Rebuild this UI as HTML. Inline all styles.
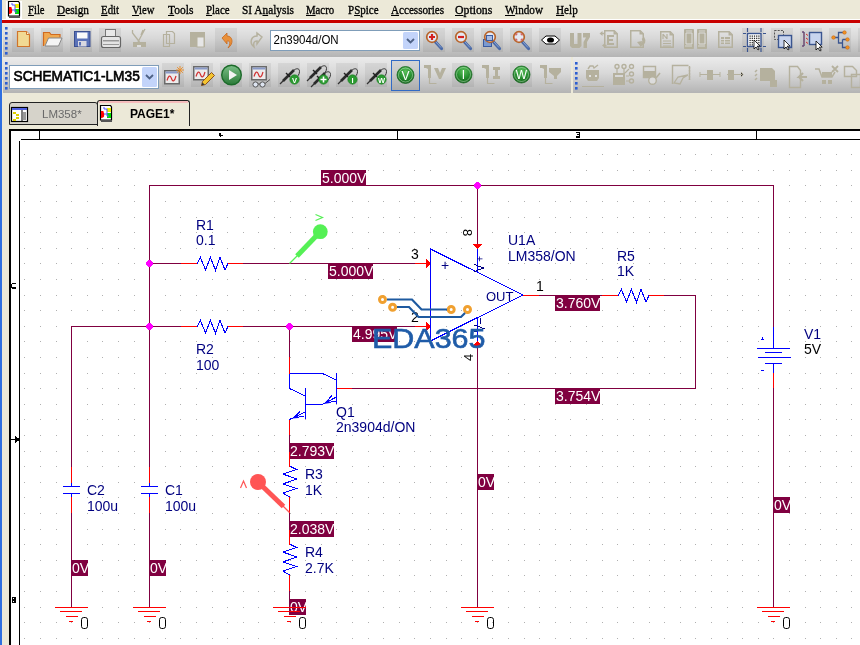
<!DOCTYPE html>
<html><head><meta charset="utf-8"><style>
*{margin:0;padding:0;box-sizing:border-box}
html,body{width:860px;height:645px;overflow:hidden;background:#ece9d8;font-family:"Liberation Sans",sans-serif}
.a{position:absolute}
#menu span{position:absolute;top:2px;transform-origin:0 0;font-family:"Liberation Serif",serif;font-size:13px;color:#000;white-space:nowrap;-webkit-text-stroke:0.35px #000}
svg text{font-family:"Liberation Sans",sans-serif}
svg,#menu,.a{will-change:transform}
</style></head><body>
<div class="a" style="left:0;top:0;width:2px;height:645px;background:#2f6fe0"></div>
<div id="menu" class="a" style="left:0;top:0;width:860px;height:19px"><span style="left:28.00px;transform:scaleX(0.820)"><u>F</u>ile</span><span style="left:56.70px;transform:scaleX(0.868)"><u>D</u>esign</span><span style="left:101.40px;transform:scaleX(0.836)"><u>E</u>dit</span><span style="left:132.00px;transform:scaleX(0.814)"><u>V</u>iew</span><span style="left:168.40px;transform:scaleX(0.883)"><u>T</u>ools</span><span style="left:205.50px;transform:scaleX(0.839)"><u>P</u>lace</span><span style="left:241.50px;transform:scaleX(0.872)">SI A<u>n</u>alysis</span><span style="left:306.40px;transform:scaleX(0.829)"><u>M</u>acro</span><span style="left:347.60px;transform:scaleX(0.847)">P<u>S</u>pice</span><span style="left:391.00px;transform:scaleX(0.855)"><u>A</u>ccessories</span><span style="left:455.20px;transform:scaleX(0.905)"><u>O</u>ptions</span><span style="left:504.50px;transform:scaleX(0.858)"><u>W</u>indow</span><span style="left:555.80px;transform:scaleX(0.860)"><u>H</u>elp</span></div>
<div class="a" style="left:2px;top:19px;width:858px;height:1px;background:#fff"></div>
<div class="a" style="left:2px;top:20px;width:858px;height:3px;background:#c80000"></div>
<div class="a" style="left:3px;top:23px;width:857px;height:34px;background:linear-gradient(#ebebeb,#d8d8d8 45%,#b4b4b4)"></div>
<div class="a" style="left:3px;top:57px;width:568px;height:36px;background:linear-gradient(#ebebeb,#d8d8d8 45%,#b4b4b4)"></div>
<div class="a" style="left:573px;top:57px;width:287px;height:36px;background:linear-gradient(#ebebeb,#d8d8d8 45%,#b4b4b4)"></div>
<svg class="a" style="left:0;top:0" width="860" height="130">
<rect x="5" y="27" width="2.6" height="2.6" fill="#2d5fd0"/>
<rect x="5" y="32" width="2.6" height="2.6" fill="#2d5fd0"/>
<rect x="5" y="37" width="2.6" height="2.6" fill="#2d5fd0"/>
<rect x="5" y="42" width="2.6" height="2.6" fill="#2d5fd0"/>
<rect x="5" y="47" width="2.6" height="2.6" fill="#2d5fd0"/>
<rect x="5" y="52" width="2.6" height="2.6" fill="#2d5fd0"/>
<rect x="12" y="28" width="22" height="24" fill="#000" fill-opacity="0.06"/>
<rect x="41" y="28" width="22" height="24" fill="#000" fill-opacity="0.06"/>
<rect x="70" y="28" width="22" height="24" fill="#000" fill-opacity="0.06"/>
<rect x="99" y="28" width="22" height="24" fill="#000" fill-opacity="0.06"/>
<rect x="215" y="28" width="22" height="24" fill="#000" fill-opacity="0.06"/>
<rect x="423" y="28" width="22" height="24" fill="#000" fill-opacity="0.06"/>
<rect x="452" y="28" width="22" height="24" fill="#000" fill-opacity="0.06"/>
<rect x="481" y="28" width="22" height="24" fill="#000" fill-opacity="0.06"/>
<rect x="510" y="28" width="22" height="24" fill="#000" fill-opacity="0.06"/>
<rect x="539" y="28" width="22" height="24" fill="#000" fill-opacity="0.06"/>
<rect x="742" y="28" width="22" height="24" fill="#000" fill-opacity="0.06"/>
<rect x="771" y="28" width="22" height="24" fill="#000" fill-opacity="0.06"/>
<rect x="800" y="28" width="22" height="24" fill="#000" fill-opacity="0.06"/>
<rect x="829" y="28" width="22" height="24" fill="#000" fill-opacity="0.06"/>
<rect x="858" y="28" width="22" height="24" fill="#000" fill-opacity="0.06"/>
<path d="M17.5,31.5 h9 l3,3 v12 h-12 z" fill="#f1d993" stroke="#d0742a" stroke-width="1.2"/>
<path d="M26.5,31.5 v3 h3" fill="#fff6d8" stroke="#d0742a" stroke-width="1"/>
<path d="M43.5,46 v-13.5 h6 l1.5,2 h9 v3" fill="#f0a850" stroke="#d06a20" stroke-width="1.2"/>
<path d="M45,46 l3.5,-8 h13.5 l-3.5,8 z" fill="#f4f4f4" stroke="#888" stroke-width="1"/>
<rect x="74.5" y="31.5" width="15.5" height="15" fill="#5a72b8" stroke="#3a4f90" stroke-width="1"/>
<rect x="77" y="32.5" width="10.5" height="6" fill="#fafafa"/>
<rect x="78" y="41" width="8.5" height="5.5" fill="#d8d8e0"/><rect x="79" y="42" width="2" height="3.5" fill="#5a72b8"/>
<rect x="105.5" y="29.5" width="10" height="8" fill="#e8e8e8" stroke="#777" stroke-width="1"/>
<rect x="101.5" y="36.5" width="19" height="11" rx="2" fill="#e4e4e4" stroke="#666" stroke-width="1.2"/>
<rect x="103" y="40" width="16" height="1.5" fill="#999"/><rect x="103" y="44" width="16" height="1" fill="#999"/>
<path d="M132.5,30 v3 l7,9 M145,29 l-7,13 M141,35 l2,-5" stroke="#b5b19e" stroke-width="1.3" fill="none"/>
<path d="M133,42 h7 v5 h-7 z M140,42 h6 v5 h-6 z" fill="#b5b19e"/><rect x="137" y="45" width="4" height="2" fill="#dcdcdc"/>
<path d="M163.5,34.5 h6 v12 h-6 z M166.5,31.5 h6 l2,2 v10 h-8 z" fill="none" stroke="#b5b19e" stroke-width="1.2"/>
<path d="M190,32 h15 v15 h-15 z" fill="#b5b19e"/><rect x="197" y="37" width="7" height="10" fill="#e6e6e6" stroke="#b5b19e"/>
<path d="M222,38 l5,-5 v3 c6,0 7,8 1,12 c3,-4 2,-8 -1,-7 v3 z" fill="#e9903a" stroke="#c86a20" stroke-width="0.8"/>
<path d="M262,37 l-5,-4 v3 c-6,0 -8,7 -3,11 c-1,-4 0,-6 3,-6 v3 z" fill="none" stroke="#b5b19e" stroke-width="1.5"/>
<rect x="270.5" y="30.5" width="149" height="20" fill="#fff" stroke="#7f9db9"/>
<rect x="403" y="32" width="15" height="17" rx="1.5" fill="#c3d4fa"/>
<path d="M407,39 l3.5,3.5 l3.5,-3.5" stroke="#4d6185" stroke-width="1.8" fill="none"/>
<text transform="translate(273.5,44) scale(0.92,1)" font-size="12.5" fill="#000">2n3904d/ON</text>
<line x1="435.5" y1="42" x2="441.5" y2="48.5" stroke="#4a6aa8" stroke-width="3.2" stroke-linecap="round"/>
<line x1="436" y1="42" x2="441" y2="47.5" stroke="#8aa4d0" stroke-width="1"/>
<circle cx="432" cy="37" r="5.3" fill="#e4e8f2" stroke="#b8642a" stroke-width="1.7"/>
<path d="M429,37 h6 M432,34 v6" stroke="#d42020" stroke-width="2.2"/>
<line x1="464.5" y1="42" x2="470.5" y2="48.5" stroke="#4a6aa8" stroke-width="3.2" stroke-linecap="round"/>
<line x1="465" y1="42" x2="470" y2="47.5" stroke="#8aa4d0" stroke-width="1"/>
<circle cx="461" cy="37" r="5.3" fill="#e4e8f2" stroke="#b8642a" stroke-width="1.7"/>
<path d="M458,37 h6" stroke="#d42020" stroke-width="2.2"/>
<rect x="483.5" y="39.5" width="8" height="7" fill="#7b9ad0" stroke="#3b5ba0"/>
<line x1="493.5" y1="42" x2="499.5" y2="48.5" stroke="#4a6aa8" stroke-width="3.2" stroke-linecap="round"/>
<line x1="494" y1="42" x2="499" y2="47.5" stroke="#8aa4d0" stroke-width="1"/>
<circle cx="490" cy="37" r="5.3" fill="#e4e8f2" stroke="#b8642a" stroke-width="1.7"/>
<rect x="486.5" y="35.5" width="6" height="5" fill="#a8bce4" stroke="#3b5ba0"/>
<line x1="522.5" y1="42" x2="528.5" y2="48.5" stroke="#4a6aa8" stroke-width="3.2" stroke-linecap="round"/>
<line x1="523" y1="42" x2="528" y2="47.5" stroke="#8aa4d0" stroke-width="1"/>
<circle cx="519" cy="37" r="5.3" fill="#e4e8f2" stroke="#b8642a" stroke-width="1.7"/>
<path d="M516,35.5 v-1.5 h1.5 M520.5,34 h1.5 v1.5 M522,38.5 v1.5 h-1.5 M517.5,40 h-1.5 v-1.5" stroke="#d04040" stroke-width="1.1" fill="none"/>
<path d="M541.5,40 l4.5,-4 h9 l4.5,4 l-4.5,4 h-9 z" fill="#fff" stroke="#000" stroke-width="1"/><ellipse cx="550.5" cy="40" rx="3.5" ry="2.6" fill="#000"/>
<path d="M570,33 h4 v11 h3.5 v-11 h4 v13 l-2,2 h-7.5 l-2,-2 z M583,33 h7 v4 l-3,5 v6 h-3.5 v-6 l2.5,-4.5 h-3 z" fill="#b5b19e"/>
<path d="M604.75,30.75 h9.5 l3,3 v13.5 h-12.5 z M614.25,30.75 v3 h3" fill="none" stroke="#b5b19e" stroke-width="1.5"/>
<path d="M607,35 h7 v2 h-5 v2 h4 v2 h-4 v2 h5 v2 h-7 z" fill="#b5b19e"/><path d="M599.5,33.5 l3,-2.5 v5 z M602,45.5 l3,-2.5 v5 z" fill="#b5b19e"/><path d="M602,33.5 h3 M604.5,45.5 h2" stroke="#b5b19e" stroke-width="1.5"/>
<path d="M630.75,30.75 h9.5 l3,3 v13.5 h-12.5 z M640.25,30.75 v3 h3" fill="none" stroke="#b5b19e" stroke-width="1.5"/>
<path d="M643,38 c2,3 1,6 -3,7" stroke="#b5b19e" stroke-width="3" fill="none"/><path d="M637,42 l4,5 l1,-6 z" fill="#b5b19e"/>
<path d="M660.75,31.75 h9.5 l3,3 v12.5 h-12.5 z M670.25,31.75 v3 h3" fill="none" stroke="#b5b19e" stroke-width="1.5"/>
<path d="M663,34 v5 M663,34 l4,5 M667,34 v5 M663,41 h8 M663,43.5 h8 M663,46 h8" stroke="#b5b19e" stroke-width="1.2" fill="none"/>
<path d="M684.5,29.5 h9 v19 h-9 z M697.5,29.5 h9 v19 h-9 z" fill="#b5b19e" stroke="#b5b19e"/><path d="M686,33 h6 v11 h-6z M699,33 h6 v11 h-6z" fill="none" stroke="#dcdcdc" stroke-width="1"/><path d="M686,31 h6 M699,31 h6 M685,46 h7 M698,46 h7" stroke="#e0e0e0" stroke-width=".8"/>
<path d="M718.75,31.75 h10.5 l3,3 v12.5 h-13.5 z M729.25,31.75 v3 h3" fill="none" stroke="#b5b19e" stroke-width="1.5"/>
<path d="M721,37 h9 v7 h-9 z" fill="#b5b19e"/><path d="M721,39.5 h9 M721,42 h9 M724.5,37 v7" stroke="#dedede" stroke-width=".8"/>
<rect x="747.5" y="33.5" width="13.5" height="13" fill="#fff" stroke="#3a5590" stroke-width="1.4"/>
<rect x="749.5" y="35.5" width="1.2" height="1.2" fill="#111"/>
<rect x="749.5" y="37.7" width="1.2" height="1.2" fill="#111"/>
<rect x="749.5" y="39.9" width="1.2" height="1.2" fill="#111"/>
<rect x="749.5" y="42.1" width="1.2" height="1.2" fill="#111"/>
<rect x="749.5" y="44.3" width="1.2" height="1.2" fill="#111"/>
<rect x="751.7" y="35.5" width="1.2" height="1.2" fill="#111"/>
<rect x="751.7" y="37.7" width="1.2" height="1.2" fill="#111"/>
<rect x="751.7" y="39.9" width="1.2" height="1.2" fill="#111"/>
<rect x="751.7" y="42.1" width="1.2" height="1.2" fill="#111"/>
<rect x="751.7" y="44.3" width="1.2" height="1.2" fill="#111"/>
<rect x="753.9" y="35.5" width="1.2" height="1.2" fill="#111"/>
<rect x="753.9" y="37.7" width="1.2" height="1.2" fill="#111"/>
<rect x="753.9" y="39.9" width="1.2" height="1.2" fill="#111"/>
<rect x="753.9" y="42.1" width="1.2" height="1.2" fill="#111"/>
<rect x="753.9" y="44.3" width="1.2" height="1.2" fill="#111"/>
<rect x="756.1" y="35.5" width="1.2" height="1.2" fill="#111"/>
<rect x="756.1" y="37.7" width="1.2" height="1.2" fill="#111"/>
<rect x="756.1" y="39.9" width="1.2" height="1.2" fill="#111"/>
<rect x="756.1" y="42.1" width="1.2" height="1.2" fill="#111"/>
<rect x="756.1" y="44.3" width="1.2" height="1.2" fill="#111"/>
<rect x="758.3" y="35.5" width="1.2" height="1.2" fill="#111"/>
<rect x="758.3" y="37.7" width="1.2" height="1.2" fill="#111"/>
<rect x="758.3" y="39.9" width="1.2" height="1.2" fill="#111"/>
<rect x="758.3" y="42.1" width="1.2" height="1.2" fill="#111"/>
<rect x="758.3" y="44.3" width="1.2" height="1.2" fill="#111"/>
<path d="M747.5,28 v4 M761,28 v4 M747.5,48 v4 M761,48 v4 M743,33.5 h3 M763,33.5 h3 M743,46.5 h3 M763,46.5 h3" stroke="#3a5590" stroke-width="1.2"/>
<path d="M754,40 v9 l2,-2 l2,3 l1.2,-.8 l-2,-3 h3 z" fill="#fff" stroke="#000" stroke-width=".8"/>
<path d="M774.5,30.5 h9 v9 h-9 z" fill="none" stroke="#555" stroke-dasharray="2 1.2"/><rect x="778.5" y="35.5" width="13" height="12" fill="#c8d4ee" stroke="#3a5590" stroke-width="1.4"/>
<path d="M784,40 v9 l2,-2 l2,3 l1.2,-.8 l-2,-3 h3 z" fill="#fff" stroke="#000" stroke-width=".8"/>
<path d="M802,32 h2 v14 h-2 M806,34 l2,1.5 M806,38 l2,1.5 M806,42 l2,1.5" stroke="#d03030" fill="none"/><path d="M802,32 h2 v14 h-2" stroke="#3a5590" fill="none"/><rect x="809.5" y="32.5" width="12" height="12" fill="#c8d4ee" stroke="#3a5590" stroke-width="1.4"/>
<path d="M816,41 v9 l2,-2 l2,3 l1.2,-.8 l-2,-3 h3 z" fill="#fff" stroke="#000" stroke-width=".8"/>
<path d="M833.5,37.5 H838.5 M844.5,32.5 H838.5 V43 H842.5 M842.5,39.5 V47.5 H847.5 M842.5,39.5 H847.5" stroke="#3a5590" stroke-width="1.3" fill="none"/>
<circle cx="833.5" cy="37.5" r="1.8" fill="#f09020" stroke="#c06010" stroke-width=".5"/>
<circle cx="844.5" cy="32.5" r="1.8" fill="#f09020" stroke="#c06010" stroke-width=".5"/>
<circle cx="847.5" cy="39.5" r="1.8" fill="#f09020" stroke="#c06010" stroke-width=".5"/>
<circle cx="847.5" cy="47.5" r="1.8" fill="#f09020" stroke="#c06010" stroke-width=".5"/>
<rect x="5" y="62" width="2.6" height="2.6" fill="#2d5fd0"/>
<rect x="5" y="67" width="2.6" height="2.6" fill="#2d5fd0"/>
<rect x="5" y="72" width="2.6" height="2.6" fill="#2d5fd0"/>
<rect x="5" y="77" width="2.6" height="2.6" fill="#2d5fd0"/>
<rect x="5" y="82" width="2.6" height="2.6" fill="#2d5fd0"/>
<rect x="5" y="87" width="2.6" height="2.6" fill="#2d5fd0"/>
<rect x="9.5" y="65.5" width="149" height="23" fill="#fff" stroke="#7f9db9"/>
<rect x="142" y="67" width="15" height="20" rx="1.5" fill="#c3d4fa"/>
<path d="M146,75 l3.5,3.5 l3.5,-3.5" stroke="#4d6185" stroke-width="1.8" fill="none"/>
<text x="0" y="0" transform="translate(13.5,81) scale(0.98,1)" font-size="14" fill="#000" stroke="#000" stroke-width="0.6">SCHEMATIC1-LM35</text>
<rect x="162" y="63" width="22" height="24" fill="#000" fill-opacity="0.06"/>
<rect x="191" y="63" width="22" height="24" fill="#000" fill-opacity="0.06"/>
<rect x="220" y="63" width="22" height="24" fill="#000" fill-opacity="0.06"/>
<rect x="249" y="63" width="22" height="24" fill="#000" fill-opacity="0.06"/>
<rect x="278" y="63" width="22" height="24" fill="#000" fill-opacity="0.06"/>
<rect x="307" y="63" width="22" height="24" fill="#000" fill-opacity="0.06"/>
<rect x="336" y="63" width="22" height="24" fill="#000" fill-opacity="0.06"/>
<rect x="365" y="63" width="22" height="24" fill="#000" fill-opacity="0.06"/>
<rect x="452" y="63" width="22" height="24" fill="#000" fill-opacity="0.06"/>
<rect x="510" y="63" width="22" height="24" fill="#000" fill-opacity="0.06"/>
<rect x="391.5" y="60.5" width="28" height="30" fill="#000" fill-opacity="0.07" stroke="#316ac5"/>
<defs><linearGradient id="rg" x1="0" y1="0" x2="0" y2="1"><stop offset="0" stop-color="#7cc088"/><stop offset="1" stop-color="#2a7a38"/></linearGradient></defs>
<rect x="164.75" y="70.75" width="14.5" height="13" fill="#ececec" stroke="#6a6a6a" stroke-width="1.5"/><rect x="165.5" y="71.5" width="13" height="2" fill="#8a9ac8"/>
<path d="M167,80.5 c1.5,-5 3,-6 4.5,-2 c1.5,4 3,3 4.5,-2.5" stroke="#d03030" stroke-width="1.2" fill="none"/>
<path d="M180,66 v8 M176,70 h8 M177.2,67.2 l5.6,5.6 M182.8,67.2 l-5.6,5.6" stroke="#e89030" stroke-width="1"/>
<rect x="193.75" y="66.75" width="14.5" height="13" fill="#ececec" stroke="#6a6a6a" stroke-width="1.5"/><rect x="194.5" y="67.5" width="13" height="2" fill="#8a9ac8"/>
<path d="M196,76.5 c1.5,-5 3,-6 4.5,-2 c1.5,4 3,3 4.5,-2.5" stroke="#d03030" stroke-width="1.2" fill="none"/>
<path d="M201.5,85.5 l1,-4 l9,-9 l3,3 l-9,9 z" fill="#f4c430" stroke="#8a5020" stroke-width="1"/><path d="M201.5,85.5 l1,-3 l2,2 z" fill="#333"/>
<circle cx="231.5" cy="75" r="9.8" fill="url(#rg)" stroke="#1c6b2a" stroke-width="1.4"/><path d="M229,70 l8,5 l-8,5 z" fill="#f4f4f4"/>
<rect x="251.75" y="66.75" width="14.5" height="13" fill="#ececec" stroke="#6a6a6a" stroke-width="1.5"/><rect x="252.5" y="67.5" width="13" height="2" fill="#8a9ac8"/>
<path d="M254,76.5 c1.5,-5 3,-6 4.5,-2 c1.5,4 3,3 4.5,-2.5" stroke="#d03030" stroke-width="1.2" fill="none"/>
<circle cx="255.5" cy="84.5" r="2.6" fill="#dde4f0" stroke="#555" stroke-width="1"/><circle cx="262.5" cy="84.5" r="2.6" fill="#dde4f0" stroke="#555" stroke-width="1"/><path d="M258,84 h2 M265,83.5 l5,-4" stroke="#555"/>
<path d="M280,84 l6,-6" stroke="#333" stroke-width="1.3"/>
<path d="M283,81 l11,-11" stroke="#2a2a2a" stroke-width="2.6"/>
<path d="M286,73 l4,4" stroke="#222" stroke-width="1.4"/>
<path d="M293.5,70.5 c2,-2 6,-3 6,1 c0,3 -2,5 -4,7" stroke="#333" stroke-width="1" fill="none"/>
<circle cx="294.5" cy="79.5" r="4.7" fill="#2a9a30" stroke="#1a7a20" stroke-width=".6"/>
<text x="294.5" y="82.5" font-size="7.5" font-weight="bold" fill="#fff" text-anchor="middle">V</text>
<path d="M307,81 l6,-6" stroke="#333" stroke-width="1.3"/>
<path d="M310,78 l11,-11" stroke="#2a2a2a" stroke-width="2.6"/>
<path d="M313,70 l4,4" stroke="#222" stroke-width="1.4"/>
<path d="M320.5,67.5 c2,-2 6,-3 6,1 c0,3 -2,5 -4,7" stroke="#333" stroke-width="1" fill="none"/>
<path d="M311,87 l6,-6" stroke="#333" stroke-width="1.3"/>
<path d="M314,84 l11,-11" stroke="#2a2a2a" stroke-width="2.6"/>
<path d="M317,76 l4,4" stroke="#222" stroke-width="1.4"/>
<path d="M324.5,73.5 c2,-2 6,-3 6,1 c0,3 -2,5 -4,7" stroke="#333" stroke-width="1" fill="none"/>
<circle cx="323.5" cy="79.5" r="4.7" fill="#2a9a30" stroke="#1a7a20" stroke-width=".6"/>
<path d="M320.5,79.5 h6 M323.5,76.5 v6" stroke="#fff" stroke-width="1.6"/>
<path d="M338,84 l6,-6" stroke="#333" stroke-width="1.3"/>
<path d="M341,81 l11,-11" stroke="#2a2a2a" stroke-width="2.6"/>
<path d="M344,73 l4,4" stroke="#222" stroke-width="1.4"/>
<path d="M351.5,70.5 c2,-2 6,-3 6,1 c0,3 -2,5 -4,7" stroke="#333" stroke-width="1" fill="none"/>
<circle cx="352.5" cy="79.5" r="4.7" fill="#2a9a30" stroke="#1a7a20" stroke-width=".6"/>
<text x="352.5" y="82.5" font-size="7.5" font-weight="bold" fill="#fff" text-anchor="middle">I</text>
<path d="M367,84 l6,-6" stroke="#333" stroke-width="1.3"/>
<path d="M370,81 l11,-11" stroke="#2a2a2a" stroke-width="2.6"/>
<path d="M373,73 l4,4" stroke="#222" stroke-width="1.4"/>
<path d="M380.5,70.5 c2,-2 6,-3 6,1 c0,3 -2,5 -4,7" stroke="#333" stroke-width="1" fill="none"/>
<circle cx="381.5" cy="79.5" r="4.7" fill="#2a9a30" stroke="#1a7a20" stroke-width=".6"/>
<text x="381.5" y="82.5" font-size="7.5" font-weight="bold" fill="#fff" text-anchor="middle">W</text>
<defs><radialGradient id="gg" cx="50%" cy="30%" r="70%"><stop offset="0" stop-color="#5abf5a"/><stop offset="0.55" stop-color="#279030"/><stop offset="1" stop-color="#15621a"/></radialGradient></defs>
<circle cx="405.5" cy="75" r="8.5" fill="url(#gg)" stroke="#1d6a26" stroke-width="0.8"/><circle cx="405.5" cy="75" r="7" fill="none" stroke="#e8ffe8" stroke-opacity="0.6" stroke-width="0.7"/><text x="405.5" y="79.5" font-size="12" fill="#fff" text-anchor="middle">V</text>
<circle cx="463.5" cy="74.5" r="8.5" fill="url(#gg)" stroke="#1d6a26" stroke-width="0.8"/><circle cx="463.5" cy="74.5" r="7" fill="none" stroke="#e8ffe8" stroke-opacity="0.6" stroke-width="0.7"/><text x="463.5" y="79.0" font-size="12" fill="#fff" text-anchor="middle">I</text>
<circle cx="521.5" cy="74.5" r="8.5" fill="url(#gg)" stroke="#1d6a26" stroke-width="0.8"/><circle cx="521.5" cy="74.5" r="7" fill="none" stroke="#e8ffe8" stroke-opacity="0.6" stroke-width="0.7"/><text x="521.5" y="79.0" font-size="12" fill="#fff" text-anchor="middle">W</text>
<path d="M424,65 h7 v13 h-3 v-9 l-2,-1 h-2 z" fill="#b5b19e"/><path d="M429.5,78 v5.5 h7" stroke="#b5b19e" stroke-width="1.2" fill="none"/>
<path d="M434,68 h4 l2,5 l2,-5 h4 l-5,11 h-2 z" fill="#b5b19e"/>
<path d="M482,65 h7 v13 h-3 v-9 l-2,-1 h-2 z" fill="#b5b19e"/><path d="M487.5,78 v5.5 h7" stroke="#b5b19e" stroke-width="1.2" fill="none"/>
<path d="M493,67 h7 v3 h-2 v6 h2 v3 h-7 v-3 h2 v-6 h-2 z" fill="#b5b19e"/>
<path d="M540,65 h7 v13 h-3 v-9 l-2,-1 h-2 z" fill="#b5b19e"/><path d="M545.5,78 v5.5 h7" stroke="#b5b19e" stroke-width="1.2" fill="none"/>
<path d="M549,68 h12 v4 l-4,4 v3 h-3 v-3 l-5,-4 z" fill="#b5b19e"/>
<rect x="575" y="62" width="2.6" height="2.6" fill="#2d5fd0"/>
<rect x="575" y="67" width="2.6" height="2.6" fill="#2d5fd0"/>
<rect x="575" y="72" width="2.6" height="2.6" fill="#2d5fd0"/>
<rect x="575" y="77" width="2.6" height="2.6" fill="#2d5fd0"/>
<rect x="575" y="82" width="2.6" height="2.6" fill="#2d5fd0"/>
<rect x="575" y="87" width="2.6" height="2.6" fill="#2d5fd0"/>
<path d="M586,70 h13 v8 l-2,3 h-9 l-2,-3 z" fill="#b5b19e"/><path d="M588,69 l2,-3 h3 l1,2 l4,-3" stroke="#b5b19e" stroke-width="1.4" fill="none"/><path d="M582,86.5 h22" stroke="#b5b19e"/><rect x="589" y="75" width="2" height="2" fill="#e0e0e0"/><rect x="595" y="75" width="2" height="2" fill="#e0e0e0"/>
<rect x="613" y="73" width="12" height="12" fill="#b5b19e"/><rect x="615" y="75" width="8" height="2" fill="#d8d8d8"/>
<circle cx="617" cy="66.5" r="2" fill="none" stroke="#b5b19e" stroke-width="1.4"/>
<circle cx="624" cy="66.5" r="2" fill="none" stroke="#b5b19e" stroke-width="1.4"/>
<circle cx="631.5" cy="66.5" r="2" fill="none" stroke="#b5b19e" stroke-width="1.4"/>
<circle cx="631.5" cy="74" r="2" fill="none" stroke="#b5b19e" stroke-width="1.4"/>
<circle cx="631.5" cy="81" r="2" fill="none" stroke="#b5b19e" stroke-width="1.4"/>
<path d="M617,69 v4 M624,69 v4 M626,76 h3 M626,81 h3 M625,73 l4,-4" stroke="#b5b19e" stroke-width="1.2"/>
<path d="M643.5,66.5 h12 v11 h-12 z" fill="none" stroke="#b5b19e" stroke-width="1.4"/><rect x="643" y="71" width="13" height="6" fill="#b5b19e"/><circle cx="652.5" cy="80.5" r="3.8" fill="#dcdcdc" stroke="#b5b19e" stroke-width="1.4"/><path d="M656,78 l4,-5" stroke="#b5b19e" stroke-width="1.6"/>
<path d="M672.5,84 v-18.5 h16 M689.5,66 v14" stroke="#b5b19e" stroke-width="1.4" fill="none" stroke-dasharray="20 0"/><path d="M689.5,67 v13" stroke="#b5b19e" stroke-width="1.4" stroke-dasharray="1.5 1.5"/><path d="M674,83 l4,-6 l10,-2 l-5,3 l-3,6 z" fill="none" stroke="#b5b19e" stroke-width="1.3"/>
<path d="M700,74.5 h20 M700,72 v5 M720,72 v5" stroke="#b5b19e"/><rect x="707" y="70" width="6" height="10" fill="#b5b19e"/>
<path d="M727,74.5 h15 M741,72 l2,2.5 l-2,2.5" stroke="#b5b19e"/><rect x="728" y="70" width="6" height="10" fill="#b5b19e"/>
<path d="M760,68 h12 l3,3 v10 h-15 z" fill="#b5b19e"/><path d="M757,70 l-2,2 M757,74 l-2,2 M757,78 l-2,2 M768,78 l8,8" stroke="#b5b19e" stroke-width="1.5"/><rect x="770" y="80" width="7" height="7" fill="#b5b19e"/>
<path d="M789.5,66.5 h8 l3,4 v17 h-11 z" fill="none" stroke="#b5b19e" stroke-width="1.4"/><path d="M807,77 h-8 l4,-4 M799,77 l4,4" stroke="#b5b19e" stroke-width="2.2" fill="none"/>
<path d="M815,69 h4 l3,8 h10 l3,-5" stroke="#b5b19e" stroke-width="1.5" fill="none"/><rect x="822" y="72" width="10" height="5" fill="#b5b19e"/><rect x="822" y="80" width="4" height="4" fill="#b5b19e"/><rect x="828" y="80" width="4" height="4" fill="#b5b19e"/><path d="M832,66 l6,6 M838,66 l-6,6" stroke="#b5b19e" stroke-width="1.8"/>
<path d="M844.5,66.5 h8 l4,4 v6 h-12 z M851.5,74.5 h9 v13 h-9 z" fill="none" stroke="#b5b19e" stroke-width="1.4"/>
</svg>
<div class="a" style="left:9px;top:102px;width:89px;height:23px;background:#d6d3ca;border:1px solid #222;border-radius:3px 3px 0 0"></div>
<div class="a" style="left:42px;top:108px;font-size:11.5px;color:#6a6a6a">LM358*</div>
<div class="a" style="left:97px;top:100px;width:93px;height:26px;background:#ece9d8;border:1px solid #222;border-bottom:none;border-radius:3px 3px 0 0"></div><div class="a" style="left:99px;top:101px;width:89px;height:2px;background:#f5bcbc"></div>
<div class="a" style="left:130px;top:107px;font-size:12px;font-weight:bold;color:#000">PAGE1*</div>
<svg class="a" style="left:0;top:0" width="860" height="130">
<rect x="6" y="1" width="16" height="18" fill="#fff"/>
<path d="M8.5,1.5 h10 l1,1.5 v13 h-11 z" fill="#fff" stroke="#000" stroke-width="1.2"/>
<rect x="9" y="16" width="11" height="2" fill="#555"/>
<path d="M9,7.5 a3,3 0 0 1 0,6.5 z" fill="#f00"/><rect x="9" y="7" width="2.5" height="6" fill="#f00"/>
<rect x="15" y="4" width="4" height="4" fill="#ee0"/><rect x="15" y="9" width="4" height="5" fill="#0d0"/>
<path d="M12,3 v2 h3 v5 h-3 M15,10 v2 h2" stroke="#55f" fill="none" stroke-width="1"/><g transform="translate(92,104)">
<path d="M8.5,1.5 h10 l1,1.5 v13 h-11 z" fill="#fff" stroke="#000" stroke-width="1.2"/>
<rect x="9" y="16" width="11" height="2" fill="#555"/>
<path d="M9,7.5 a3,3 0 0 1 0,6.5 z" fill="#f00"/><rect x="9" y="7" width="2.5" height="6" fill="#f00"/>
<rect x="15" y="4" width="4" height="4" fill="#ee0"/><rect x="15" y="9" width="4" height="5" fill="#0d0"/>
<path d="M12,3 v2 h3 v5 h-3 M15,10 v2 h2" stroke="#55f" fill="none" stroke-width="1"/></g>
<rect x="11.5" y="107.5" width="16" height="14" fill="#fff" stroke="#000" stroke-width="1.2"/>
<rect x="12" y="108" width="15" height="2" fill="#5060e0"/>
<rect x="21.5" y="110" width="1" height="11" fill="#000"/>
<rect x="13" y="112" width="3" height="2" fill="#ddd000"/><rect x="16" y="114" width="3" height="2" fill="#ddd000"/><rect x="16" y="117" width="3" height="2" fill="#ddd000"/><rect x="13" y="119" width="3" height="2" fill="#ddd000"/>
<rect x="23" y="112" width="3" height="8" fill="#999"/>
</svg>
<div class="a" style="left:11px;top:131px;width:849px;height:514px;background:#fff"></div>
<div class="a" style="left:9px;top:129px;width:851px;height:2px;background:#000"></div>
<div class="a" style="left:9px;top:129px;width:2px;height:516px;background:#000"></div>
<div class="a" style="left:21px;top:139px;width:839px;height:1px;background:#000"></div>
<div class="a" style="left:19px;top:141px;width:1px;height:504px;background:#000"></div>
<div class="a" style="left:39px;top:131px;width:1px;height:8px;background:#000"></div><div class="a" style="left:397px;top:131px;width:1px;height:8px;background:#000"></div><div class="a" style="left:756px;top:131px;width:1px;height:8px;background:#000"></div>
<svg class="a" style="left:0;top:0" width="860" height="645" shape-rendering="crispEdges">
<path d="M24 154h1v1h-1zM40 154h1v1h-1zM56 154h1v1h-1zM71 154h1v1h-1zM87 154h1v1h-1zM102 154h1v1h-1zM118 154h1v1h-1zM134 154h1v1h-1zM149 154h1v1h-1zM165 154h1v1h-1zM180 154h1v1h-1zM196 154h1v1h-1zM212 154h1v1h-1zM227 154h1v1h-1zM243 154h1v1h-1zM258 154h1v1h-1zM274 154h1v1h-1zM290 154h1v1h-1zM305 154h1v1h-1zM321 154h1v1h-1zM336 154h1v1h-1zM352 154h1v1h-1zM368 154h1v1h-1zM383 154h1v1h-1zM399 154h1v1h-1zM414 154h1v1h-1zM430 154h1v1h-1zM446 154h1v1h-1zM461 154h1v1h-1zM477 154h1v1h-1zM492 154h1v1h-1zM508 154h1v1h-1zM524 154h1v1h-1zM539 154h1v1h-1zM555 154h1v1h-1zM570 154h1v1h-1zM586 154h1v1h-1zM602 154h1v1h-1zM617 154h1v1h-1zM633 154h1v1h-1zM649 154h1v1h-1zM664 154h1v1h-1zM680 154h1v1h-1zM695 154h1v1h-1zM711 154h1v1h-1zM727 154h1v1h-1zM742 154h1v1h-1zM758 154h1v1h-1zM773 154h1v1h-1zM789 154h1v1h-1zM805 154h1v1h-1zM820 154h1v1h-1zM836 154h1v1h-1zM851 154h1v1h-1zM24 170h1v1h-1zM40 170h1v1h-1zM56 170h1v1h-1zM71 170h1v1h-1zM87 170h1v1h-1zM102 170h1v1h-1zM118 170h1v1h-1zM134 170h1v1h-1zM149 170h1v1h-1zM165 170h1v1h-1zM180 170h1v1h-1zM196 170h1v1h-1zM212 170h1v1h-1zM227 170h1v1h-1zM243 170h1v1h-1zM258 170h1v1h-1zM274 170h1v1h-1zM290 170h1v1h-1zM305 170h1v1h-1zM321 170h1v1h-1zM336 170h1v1h-1zM352 170h1v1h-1zM368 170h1v1h-1zM383 170h1v1h-1zM399 170h1v1h-1zM414 170h1v1h-1zM430 170h1v1h-1zM446 170h1v1h-1zM461 170h1v1h-1zM477 170h1v1h-1zM492 170h1v1h-1zM508 170h1v1h-1zM524 170h1v1h-1zM539 170h1v1h-1zM555 170h1v1h-1zM570 170h1v1h-1zM586 170h1v1h-1zM602 170h1v1h-1zM617 170h1v1h-1zM633 170h1v1h-1zM649 170h1v1h-1zM664 170h1v1h-1zM680 170h1v1h-1zM695 170h1v1h-1zM711 170h1v1h-1zM727 170h1v1h-1zM742 170h1v1h-1zM758 170h1v1h-1zM773 170h1v1h-1zM789 170h1v1h-1zM805 170h1v1h-1zM820 170h1v1h-1zM836 170h1v1h-1zM851 170h1v1h-1zM24 185h1v1h-1zM40 185h1v1h-1zM56 185h1v1h-1zM71 185h1v1h-1zM87 185h1v1h-1zM102 185h1v1h-1zM118 185h1v1h-1zM134 185h1v1h-1zM149 185h1v1h-1zM165 185h1v1h-1zM180 185h1v1h-1zM196 185h1v1h-1zM212 185h1v1h-1zM227 185h1v1h-1zM243 185h1v1h-1zM258 185h1v1h-1zM274 185h1v1h-1zM290 185h1v1h-1zM305 185h1v1h-1zM321 185h1v1h-1zM336 185h1v1h-1zM352 185h1v1h-1zM368 185h1v1h-1zM383 185h1v1h-1zM399 185h1v1h-1zM414 185h1v1h-1zM430 185h1v1h-1zM446 185h1v1h-1zM461 185h1v1h-1zM477 185h1v1h-1zM492 185h1v1h-1zM508 185h1v1h-1zM524 185h1v1h-1zM539 185h1v1h-1zM555 185h1v1h-1zM570 185h1v1h-1zM586 185h1v1h-1zM602 185h1v1h-1zM617 185h1v1h-1zM633 185h1v1h-1zM649 185h1v1h-1zM664 185h1v1h-1zM680 185h1v1h-1zM695 185h1v1h-1zM711 185h1v1h-1zM727 185h1v1h-1zM742 185h1v1h-1zM758 185h1v1h-1zM773 185h1v1h-1zM789 185h1v1h-1zM805 185h1v1h-1zM820 185h1v1h-1zM836 185h1v1h-1zM851 185h1v1h-1zM24 201h1v1h-1zM40 201h1v1h-1zM56 201h1v1h-1zM71 201h1v1h-1zM87 201h1v1h-1zM102 201h1v1h-1zM118 201h1v1h-1zM134 201h1v1h-1zM149 201h1v1h-1zM165 201h1v1h-1zM180 201h1v1h-1zM196 201h1v1h-1zM212 201h1v1h-1zM227 201h1v1h-1zM243 201h1v1h-1zM258 201h1v1h-1zM274 201h1v1h-1zM290 201h1v1h-1zM305 201h1v1h-1zM321 201h1v1h-1zM336 201h1v1h-1zM352 201h1v1h-1zM368 201h1v1h-1zM383 201h1v1h-1zM399 201h1v1h-1zM414 201h1v1h-1zM430 201h1v1h-1zM446 201h1v1h-1zM461 201h1v1h-1zM477 201h1v1h-1zM492 201h1v1h-1zM508 201h1v1h-1zM524 201h1v1h-1zM539 201h1v1h-1zM555 201h1v1h-1zM570 201h1v1h-1zM586 201h1v1h-1zM602 201h1v1h-1zM617 201h1v1h-1zM633 201h1v1h-1zM649 201h1v1h-1zM664 201h1v1h-1zM680 201h1v1h-1zM695 201h1v1h-1zM711 201h1v1h-1zM727 201h1v1h-1zM742 201h1v1h-1zM758 201h1v1h-1zM773 201h1v1h-1zM789 201h1v1h-1zM805 201h1v1h-1zM820 201h1v1h-1zM836 201h1v1h-1zM851 201h1v1h-1zM24 217h1v1h-1zM40 217h1v1h-1zM56 217h1v1h-1zM71 217h1v1h-1zM87 217h1v1h-1zM102 217h1v1h-1zM118 217h1v1h-1zM134 217h1v1h-1zM149 217h1v1h-1zM165 217h1v1h-1zM180 217h1v1h-1zM196 217h1v1h-1zM212 217h1v1h-1zM227 217h1v1h-1zM243 217h1v1h-1zM258 217h1v1h-1zM274 217h1v1h-1zM290 217h1v1h-1zM305 217h1v1h-1zM321 217h1v1h-1zM336 217h1v1h-1zM352 217h1v1h-1zM368 217h1v1h-1zM383 217h1v1h-1zM399 217h1v1h-1zM414 217h1v1h-1zM430 217h1v1h-1zM446 217h1v1h-1zM461 217h1v1h-1zM477 217h1v1h-1zM492 217h1v1h-1zM508 217h1v1h-1zM524 217h1v1h-1zM539 217h1v1h-1zM555 217h1v1h-1zM570 217h1v1h-1zM586 217h1v1h-1zM602 217h1v1h-1zM617 217h1v1h-1zM633 217h1v1h-1zM649 217h1v1h-1zM664 217h1v1h-1zM680 217h1v1h-1zM695 217h1v1h-1zM711 217h1v1h-1zM727 217h1v1h-1zM742 217h1v1h-1zM758 217h1v1h-1zM773 217h1v1h-1zM789 217h1v1h-1zM805 217h1v1h-1zM820 217h1v1h-1zM836 217h1v1h-1zM851 217h1v1h-1zM24 232h1v1h-1zM40 232h1v1h-1zM56 232h1v1h-1zM71 232h1v1h-1zM87 232h1v1h-1zM102 232h1v1h-1zM118 232h1v1h-1zM134 232h1v1h-1zM149 232h1v1h-1zM165 232h1v1h-1zM180 232h1v1h-1zM196 232h1v1h-1zM212 232h1v1h-1zM227 232h1v1h-1zM243 232h1v1h-1zM258 232h1v1h-1zM274 232h1v1h-1zM290 232h1v1h-1zM305 232h1v1h-1zM321 232h1v1h-1zM336 232h1v1h-1zM352 232h1v1h-1zM368 232h1v1h-1zM383 232h1v1h-1zM399 232h1v1h-1zM414 232h1v1h-1zM430 232h1v1h-1zM446 232h1v1h-1zM461 232h1v1h-1zM477 232h1v1h-1zM492 232h1v1h-1zM508 232h1v1h-1zM524 232h1v1h-1zM539 232h1v1h-1zM555 232h1v1h-1zM570 232h1v1h-1zM586 232h1v1h-1zM602 232h1v1h-1zM617 232h1v1h-1zM633 232h1v1h-1zM649 232h1v1h-1zM664 232h1v1h-1zM680 232h1v1h-1zM695 232h1v1h-1zM711 232h1v1h-1zM727 232h1v1h-1zM742 232h1v1h-1zM758 232h1v1h-1zM773 232h1v1h-1zM789 232h1v1h-1zM805 232h1v1h-1zM820 232h1v1h-1zM836 232h1v1h-1zM851 232h1v1h-1zM24 248h1v1h-1zM40 248h1v1h-1zM56 248h1v1h-1zM71 248h1v1h-1zM87 248h1v1h-1zM102 248h1v1h-1zM118 248h1v1h-1zM134 248h1v1h-1zM149 248h1v1h-1zM165 248h1v1h-1zM180 248h1v1h-1zM196 248h1v1h-1zM212 248h1v1h-1zM227 248h1v1h-1zM243 248h1v1h-1zM258 248h1v1h-1zM274 248h1v1h-1zM290 248h1v1h-1zM305 248h1v1h-1zM321 248h1v1h-1zM336 248h1v1h-1zM352 248h1v1h-1zM368 248h1v1h-1zM383 248h1v1h-1zM399 248h1v1h-1zM414 248h1v1h-1zM430 248h1v1h-1zM446 248h1v1h-1zM461 248h1v1h-1zM477 248h1v1h-1zM492 248h1v1h-1zM508 248h1v1h-1zM524 248h1v1h-1zM539 248h1v1h-1zM555 248h1v1h-1zM570 248h1v1h-1zM586 248h1v1h-1zM602 248h1v1h-1zM617 248h1v1h-1zM633 248h1v1h-1zM649 248h1v1h-1zM664 248h1v1h-1zM680 248h1v1h-1zM695 248h1v1h-1zM711 248h1v1h-1zM727 248h1v1h-1zM742 248h1v1h-1zM758 248h1v1h-1zM773 248h1v1h-1zM789 248h1v1h-1zM805 248h1v1h-1zM820 248h1v1h-1zM836 248h1v1h-1zM851 248h1v1h-1zM24 263h1v1h-1zM40 263h1v1h-1zM56 263h1v1h-1zM71 263h1v1h-1zM87 263h1v1h-1zM102 263h1v1h-1zM118 263h1v1h-1zM134 263h1v1h-1zM149 263h1v1h-1zM165 263h1v1h-1zM180 263h1v1h-1zM196 263h1v1h-1zM212 263h1v1h-1zM227 263h1v1h-1zM243 263h1v1h-1zM258 263h1v1h-1zM274 263h1v1h-1zM290 263h1v1h-1zM305 263h1v1h-1zM321 263h1v1h-1zM336 263h1v1h-1zM352 263h1v1h-1zM368 263h1v1h-1zM383 263h1v1h-1zM399 263h1v1h-1zM414 263h1v1h-1zM430 263h1v1h-1zM446 263h1v1h-1zM461 263h1v1h-1zM477 263h1v1h-1zM492 263h1v1h-1zM508 263h1v1h-1zM524 263h1v1h-1zM539 263h1v1h-1zM555 263h1v1h-1zM570 263h1v1h-1zM586 263h1v1h-1zM602 263h1v1h-1zM617 263h1v1h-1zM633 263h1v1h-1zM649 263h1v1h-1zM664 263h1v1h-1zM680 263h1v1h-1zM695 263h1v1h-1zM711 263h1v1h-1zM727 263h1v1h-1zM742 263h1v1h-1zM758 263h1v1h-1zM773 263h1v1h-1zM789 263h1v1h-1zM805 263h1v1h-1zM820 263h1v1h-1zM836 263h1v1h-1zM851 263h1v1h-1zM24 279h1v1h-1zM40 279h1v1h-1zM56 279h1v1h-1zM71 279h1v1h-1zM87 279h1v1h-1zM102 279h1v1h-1zM118 279h1v1h-1zM134 279h1v1h-1zM149 279h1v1h-1zM165 279h1v1h-1zM180 279h1v1h-1zM196 279h1v1h-1zM212 279h1v1h-1zM227 279h1v1h-1zM243 279h1v1h-1zM258 279h1v1h-1zM274 279h1v1h-1zM290 279h1v1h-1zM305 279h1v1h-1zM321 279h1v1h-1zM336 279h1v1h-1zM352 279h1v1h-1zM368 279h1v1h-1zM383 279h1v1h-1zM399 279h1v1h-1zM414 279h1v1h-1zM430 279h1v1h-1zM446 279h1v1h-1zM461 279h1v1h-1zM477 279h1v1h-1zM492 279h1v1h-1zM508 279h1v1h-1zM524 279h1v1h-1zM539 279h1v1h-1zM555 279h1v1h-1zM570 279h1v1h-1zM586 279h1v1h-1zM602 279h1v1h-1zM617 279h1v1h-1zM633 279h1v1h-1zM649 279h1v1h-1zM664 279h1v1h-1zM680 279h1v1h-1zM695 279h1v1h-1zM711 279h1v1h-1zM727 279h1v1h-1zM742 279h1v1h-1zM758 279h1v1h-1zM773 279h1v1h-1zM789 279h1v1h-1zM805 279h1v1h-1zM820 279h1v1h-1zM836 279h1v1h-1zM851 279h1v1h-1zM24 295h1v1h-1zM40 295h1v1h-1zM56 295h1v1h-1zM71 295h1v1h-1zM87 295h1v1h-1zM102 295h1v1h-1zM118 295h1v1h-1zM134 295h1v1h-1zM149 295h1v1h-1zM165 295h1v1h-1zM180 295h1v1h-1zM196 295h1v1h-1zM212 295h1v1h-1zM227 295h1v1h-1zM243 295h1v1h-1zM258 295h1v1h-1zM274 295h1v1h-1zM290 295h1v1h-1zM305 295h1v1h-1zM321 295h1v1h-1zM336 295h1v1h-1zM352 295h1v1h-1zM368 295h1v1h-1zM383 295h1v1h-1zM399 295h1v1h-1zM414 295h1v1h-1zM430 295h1v1h-1zM446 295h1v1h-1zM461 295h1v1h-1zM477 295h1v1h-1zM492 295h1v1h-1zM508 295h1v1h-1zM524 295h1v1h-1zM539 295h1v1h-1zM555 295h1v1h-1zM570 295h1v1h-1zM586 295h1v1h-1zM602 295h1v1h-1zM617 295h1v1h-1zM633 295h1v1h-1zM649 295h1v1h-1zM664 295h1v1h-1zM680 295h1v1h-1zM695 295h1v1h-1zM711 295h1v1h-1zM727 295h1v1h-1zM742 295h1v1h-1zM758 295h1v1h-1zM773 295h1v1h-1zM789 295h1v1h-1zM805 295h1v1h-1zM820 295h1v1h-1zM836 295h1v1h-1zM851 295h1v1h-1zM24 310h1v1h-1zM40 310h1v1h-1zM56 310h1v1h-1zM71 310h1v1h-1zM87 310h1v1h-1zM102 310h1v1h-1zM118 310h1v1h-1zM134 310h1v1h-1zM149 310h1v1h-1zM165 310h1v1h-1zM180 310h1v1h-1zM196 310h1v1h-1zM212 310h1v1h-1zM227 310h1v1h-1zM243 310h1v1h-1zM258 310h1v1h-1zM274 310h1v1h-1zM290 310h1v1h-1zM305 310h1v1h-1zM321 310h1v1h-1zM336 310h1v1h-1zM352 310h1v1h-1zM368 310h1v1h-1zM383 310h1v1h-1zM399 310h1v1h-1zM414 310h1v1h-1zM430 310h1v1h-1zM446 310h1v1h-1zM461 310h1v1h-1zM477 310h1v1h-1zM492 310h1v1h-1zM508 310h1v1h-1zM524 310h1v1h-1zM539 310h1v1h-1zM555 310h1v1h-1zM570 310h1v1h-1zM586 310h1v1h-1zM602 310h1v1h-1zM617 310h1v1h-1zM633 310h1v1h-1zM649 310h1v1h-1zM664 310h1v1h-1zM680 310h1v1h-1zM695 310h1v1h-1zM711 310h1v1h-1zM727 310h1v1h-1zM742 310h1v1h-1zM758 310h1v1h-1zM773 310h1v1h-1zM789 310h1v1h-1zM805 310h1v1h-1zM820 310h1v1h-1zM836 310h1v1h-1zM851 310h1v1h-1zM24 326h1v1h-1zM40 326h1v1h-1zM56 326h1v1h-1zM71 326h1v1h-1zM87 326h1v1h-1zM102 326h1v1h-1zM118 326h1v1h-1zM134 326h1v1h-1zM149 326h1v1h-1zM165 326h1v1h-1zM180 326h1v1h-1zM196 326h1v1h-1zM212 326h1v1h-1zM227 326h1v1h-1zM243 326h1v1h-1zM258 326h1v1h-1zM274 326h1v1h-1zM290 326h1v1h-1zM305 326h1v1h-1zM321 326h1v1h-1zM336 326h1v1h-1zM352 326h1v1h-1zM368 326h1v1h-1zM383 326h1v1h-1zM399 326h1v1h-1zM414 326h1v1h-1zM430 326h1v1h-1zM446 326h1v1h-1zM461 326h1v1h-1zM477 326h1v1h-1zM492 326h1v1h-1zM508 326h1v1h-1zM524 326h1v1h-1zM539 326h1v1h-1zM555 326h1v1h-1zM570 326h1v1h-1zM586 326h1v1h-1zM602 326h1v1h-1zM617 326h1v1h-1zM633 326h1v1h-1zM649 326h1v1h-1zM664 326h1v1h-1zM680 326h1v1h-1zM695 326h1v1h-1zM711 326h1v1h-1zM727 326h1v1h-1zM742 326h1v1h-1zM758 326h1v1h-1zM773 326h1v1h-1zM789 326h1v1h-1zM805 326h1v1h-1zM820 326h1v1h-1zM836 326h1v1h-1zM851 326h1v1h-1zM24 341h1v1h-1zM40 341h1v1h-1zM56 341h1v1h-1zM71 341h1v1h-1zM87 341h1v1h-1zM102 341h1v1h-1zM118 341h1v1h-1zM134 341h1v1h-1zM149 341h1v1h-1zM165 341h1v1h-1zM180 341h1v1h-1zM196 341h1v1h-1zM212 341h1v1h-1zM227 341h1v1h-1zM243 341h1v1h-1zM258 341h1v1h-1zM274 341h1v1h-1zM290 341h1v1h-1zM305 341h1v1h-1zM321 341h1v1h-1zM336 341h1v1h-1zM352 341h1v1h-1zM368 341h1v1h-1zM383 341h1v1h-1zM399 341h1v1h-1zM414 341h1v1h-1zM430 341h1v1h-1zM446 341h1v1h-1zM461 341h1v1h-1zM477 341h1v1h-1zM492 341h1v1h-1zM508 341h1v1h-1zM524 341h1v1h-1zM539 341h1v1h-1zM555 341h1v1h-1zM570 341h1v1h-1zM586 341h1v1h-1zM602 341h1v1h-1zM617 341h1v1h-1zM633 341h1v1h-1zM649 341h1v1h-1zM664 341h1v1h-1zM680 341h1v1h-1zM695 341h1v1h-1zM711 341h1v1h-1zM727 341h1v1h-1zM742 341h1v1h-1zM758 341h1v1h-1zM773 341h1v1h-1zM789 341h1v1h-1zM805 341h1v1h-1zM820 341h1v1h-1zM836 341h1v1h-1zM851 341h1v1h-1zM24 357h1v1h-1zM40 357h1v1h-1zM56 357h1v1h-1zM71 357h1v1h-1zM87 357h1v1h-1zM102 357h1v1h-1zM118 357h1v1h-1zM134 357h1v1h-1zM149 357h1v1h-1zM165 357h1v1h-1zM180 357h1v1h-1zM196 357h1v1h-1zM212 357h1v1h-1zM227 357h1v1h-1zM243 357h1v1h-1zM258 357h1v1h-1zM274 357h1v1h-1zM290 357h1v1h-1zM305 357h1v1h-1zM321 357h1v1h-1zM336 357h1v1h-1zM352 357h1v1h-1zM368 357h1v1h-1zM383 357h1v1h-1zM399 357h1v1h-1zM414 357h1v1h-1zM430 357h1v1h-1zM446 357h1v1h-1zM461 357h1v1h-1zM477 357h1v1h-1zM492 357h1v1h-1zM508 357h1v1h-1zM524 357h1v1h-1zM539 357h1v1h-1zM555 357h1v1h-1zM570 357h1v1h-1zM586 357h1v1h-1zM602 357h1v1h-1zM617 357h1v1h-1zM633 357h1v1h-1zM649 357h1v1h-1zM664 357h1v1h-1zM680 357h1v1h-1zM695 357h1v1h-1zM711 357h1v1h-1zM727 357h1v1h-1zM742 357h1v1h-1zM758 357h1v1h-1zM773 357h1v1h-1zM789 357h1v1h-1zM805 357h1v1h-1zM820 357h1v1h-1zM836 357h1v1h-1zM851 357h1v1h-1zM24 373h1v1h-1zM40 373h1v1h-1zM56 373h1v1h-1zM71 373h1v1h-1zM87 373h1v1h-1zM102 373h1v1h-1zM118 373h1v1h-1zM134 373h1v1h-1zM149 373h1v1h-1zM165 373h1v1h-1zM180 373h1v1h-1zM196 373h1v1h-1zM212 373h1v1h-1zM227 373h1v1h-1zM243 373h1v1h-1zM258 373h1v1h-1zM274 373h1v1h-1zM290 373h1v1h-1zM305 373h1v1h-1zM321 373h1v1h-1zM336 373h1v1h-1zM352 373h1v1h-1zM368 373h1v1h-1zM383 373h1v1h-1zM399 373h1v1h-1zM414 373h1v1h-1zM430 373h1v1h-1zM446 373h1v1h-1zM461 373h1v1h-1zM477 373h1v1h-1zM492 373h1v1h-1zM508 373h1v1h-1zM524 373h1v1h-1zM539 373h1v1h-1zM555 373h1v1h-1zM570 373h1v1h-1zM586 373h1v1h-1zM602 373h1v1h-1zM617 373h1v1h-1zM633 373h1v1h-1zM649 373h1v1h-1zM664 373h1v1h-1zM680 373h1v1h-1zM695 373h1v1h-1zM711 373h1v1h-1zM727 373h1v1h-1zM742 373h1v1h-1zM758 373h1v1h-1zM773 373h1v1h-1zM789 373h1v1h-1zM805 373h1v1h-1zM820 373h1v1h-1zM836 373h1v1h-1zM851 373h1v1h-1zM24 388h1v1h-1zM40 388h1v1h-1zM56 388h1v1h-1zM71 388h1v1h-1zM87 388h1v1h-1zM102 388h1v1h-1zM118 388h1v1h-1zM134 388h1v1h-1zM149 388h1v1h-1zM165 388h1v1h-1zM180 388h1v1h-1zM196 388h1v1h-1zM212 388h1v1h-1zM227 388h1v1h-1zM243 388h1v1h-1zM258 388h1v1h-1zM274 388h1v1h-1zM290 388h1v1h-1zM305 388h1v1h-1zM321 388h1v1h-1zM336 388h1v1h-1zM352 388h1v1h-1zM368 388h1v1h-1zM383 388h1v1h-1zM399 388h1v1h-1zM414 388h1v1h-1zM430 388h1v1h-1zM446 388h1v1h-1zM461 388h1v1h-1zM477 388h1v1h-1zM492 388h1v1h-1zM508 388h1v1h-1zM524 388h1v1h-1zM539 388h1v1h-1zM555 388h1v1h-1zM570 388h1v1h-1zM586 388h1v1h-1zM602 388h1v1h-1zM617 388h1v1h-1zM633 388h1v1h-1zM649 388h1v1h-1zM664 388h1v1h-1zM680 388h1v1h-1zM695 388h1v1h-1zM711 388h1v1h-1zM727 388h1v1h-1zM742 388h1v1h-1zM758 388h1v1h-1zM773 388h1v1h-1zM789 388h1v1h-1zM805 388h1v1h-1zM820 388h1v1h-1zM836 388h1v1h-1zM851 388h1v1h-1zM24 404h1v1h-1zM40 404h1v1h-1zM56 404h1v1h-1zM71 404h1v1h-1zM87 404h1v1h-1zM102 404h1v1h-1zM118 404h1v1h-1zM134 404h1v1h-1zM149 404h1v1h-1zM165 404h1v1h-1zM180 404h1v1h-1zM196 404h1v1h-1zM212 404h1v1h-1zM227 404h1v1h-1zM243 404h1v1h-1zM258 404h1v1h-1zM274 404h1v1h-1zM290 404h1v1h-1zM305 404h1v1h-1zM321 404h1v1h-1zM336 404h1v1h-1zM352 404h1v1h-1zM368 404h1v1h-1zM383 404h1v1h-1zM399 404h1v1h-1zM414 404h1v1h-1zM430 404h1v1h-1zM446 404h1v1h-1zM461 404h1v1h-1zM477 404h1v1h-1zM492 404h1v1h-1zM508 404h1v1h-1zM524 404h1v1h-1zM539 404h1v1h-1zM555 404h1v1h-1zM570 404h1v1h-1zM586 404h1v1h-1zM602 404h1v1h-1zM617 404h1v1h-1zM633 404h1v1h-1zM649 404h1v1h-1zM664 404h1v1h-1zM680 404h1v1h-1zM695 404h1v1h-1zM711 404h1v1h-1zM727 404h1v1h-1zM742 404h1v1h-1zM758 404h1v1h-1zM773 404h1v1h-1zM789 404h1v1h-1zM805 404h1v1h-1zM820 404h1v1h-1zM836 404h1v1h-1zM851 404h1v1h-1zM24 419h1v1h-1zM40 419h1v1h-1zM56 419h1v1h-1zM71 419h1v1h-1zM87 419h1v1h-1zM102 419h1v1h-1zM118 419h1v1h-1zM134 419h1v1h-1zM149 419h1v1h-1zM165 419h1v1h-1zM180 419h1v1h-1zM196 419h1v1h-1zM212 419h1v1h-1zM227 419h1v1h-1zM243 419h1v1h-1zM258 419h1v1h-1zM274 419h1v1h-1zM290 419h1v1h-1zM305 419h1v1h-1zM321 419h1v1h-1zM336 419h1v1h-1zM352 419h1v1h-1zM368 419h1v1h-1zM383 419h1v1h-1zM399 419h1v1h-1zM414 419h1v1h-1zM430 419h1v1h-1zM446 419h1v1h-1zM461 419h1v1h-1zM477 419h1v1h-1zM492 419h1v1h-1zM508 419h1v1h-1zM524 419h1v1h-1zM539 419h1v1h-1zM555 419h1v1h-1zM570 419h1v1h-1zM586 419h1v1h-1zM602 419h1v1h-1zM617 419h1v1h-1zM633 419h1v1h-1zM649 419h1v1h-1zM664 419h1v1h-1zM680 419h1v1h-1zM695 419h1v1h-1zM711 419h1v1h-1zM727 419h1v1h-1zM742 419h1v1h-1zM758 419h1v1h-1zM773 419h1v1h-1zM789 419h1v1h-1zM805 419h1v1h-1zM820 419h1v1h-1zM836 419h1v1h-1zM851 419h1v1h-1zM24 435h1v1h-1zM40 435h1v1h-1zM56 435h1v1h-1zM71 435h1v1h-1zM87 435h1v1h-1zM102 435h1v1h-1zM118 435h1v1h-1zM134 435h1v1h-1zM149 435h1v1h-1zM165 435h1v1h-1zM180 435h1v1h-1zM196 435h1v1h-1zM212 435h1v1h-1zM227 435h1v1h-1zM243 435h1v1h-1zM258 435h1v1h-1zM274 435h1v1h-1zM290 435h1v1h-1zM305 435h1v1h-1zM321 435h1v1h-1zM336 435h1v1h-1zM352 435h1v1h-1zM368 435h1v1h-1zM383 435h1v1h-1zM399 435h1v1h-1zM414 435h1v1h-1zM430 435h1v1h-1zM446 435h1v1h-1zM461 435h1v1h-1zM477 435h1v1h-1zM492 435h1v1h-1zM508 435h1v1h-1zM524 435h1v1h-1zM539 435h1v1h-1zM555 435h1v1h-1zM570 435h1v1h-1zM586 435h1v1h-1zM602 435h1v1h-1zM617 435h1v1h-1zM633 435h1v1h-1zM649 435h1v1h-1zM664 435h1v1h-1zM680 435h1v1h-1zM695 435h1v1h-1zM711 435h1v1h-1zM727 435h1v1h-1zM742 435h1v1h-1zM758 435h1v1h-1zM773 435h1v1h-1zM789 435h1v1h-1zM805 435h1v1h-1zM820 435h1v1h-1zM836 435h1v1h-1zM851 435h1v1h-1zM24 451h1v1h-1zM40 451h1v1h-1zM56 451h1v1h-1zM71 451h1v1h-1zM87 451h1v1h-1zM102 451h1v1h-1zM118 451h1v1h-1zM134 451h1v1h-1zM149 451h1v1h-1zM165 451h1v1h-1zM180 451h1v1h-1zM196 451h1v1h-1zM212 451h1v1h-1zM227 451h1v1h-1zM243 451h1v1h-1zM258 451h1v1h-1zM274 451h1v1h-1zM290 451h1v1h-1zM305 451h1v1h-1zM321 451h1v1h-1zM336 451h1v1h-1zM352 451h1v1h-1zM368 451h1v1h-1zM383 451h1v1h-1zM399 451h1v1h-1zM414 451h1v1h-1zM430 451h1v1h-1zM446 451h1v1h-1zM461 451h1v1h-1zM477 451h1v1h-1zM492 451h1v1h-1zM508 451h1v1h-1zM524 451h1v1h-1zM539 451h1v1h-1zM555 451h1v1h-1zM570 451h1v1h-1zM586 451h1v1h-1zM602 451h1v1h-1zM617 451h1v1h-1zM633 451h1v1h-1zM649 451h1v1h-1zM664 451h1v1h-1zM680 451h1v1h-1zM695 451h1v1h-1zM711 451h1v1h-1zM727 451h1v1h-1zM742 451h1v1h-1zM758 451h1v1h-1zM773 451h1v1h-1zM789 451h1v1h-1zM805 451h1v1h-1zM820 451h1v1h-1zM836 451h1v1h-1zM851 451h1v1h-1zM24 466h1v1h-1zM40 466h1v1h-1zM56 466h1v1h-1zM71 466h1v1h-1zM87 466h1v1h-1zM102 466h1v1h-1zM118 466h1v1h-1zM134 466h1v1h-1zM149 466h1v1h-1zM165 466h1v1h-1zM180 466h1v1h-1zM196 466h1v1h-1zM212 466h1v1h-1zM227 466h1v1h-1zM243 466h1v1h-1zM258 466h1v1h-1zM274 466h1v1h-1zM290 466h1v1h-1zM305 466h1v1h-1zM321 466h1v1h-1zM336 466h1v1h-1zM352 466h1v1h-1zM368 466h1v1h-1zM383 466h1v1h-1zM399 466h1v1h-1zM414 466h1v1h-1zM430 466h1v1h-1zM446 466h1v1h-1zM461 466h1v1h-1zM477 466h1v1h-1zM492 466h1v1h-1zM508 466h1v1h-1zM524 466h1v1h-1zM539 466h1v1h-1zM555 466h1v1h-1zM570 466h1v1h-1zM586 466h1v1h-1zM602 466h1v1h-1zM617 466h1v1h-1zM633 466h1v1h-1zM649 466h1v1h-1zM664 466h1v1h-1zM680 466h1v1h-1zM695 466h1v1h-1zM711 466h1v1h-1zM727 466h1v1h-1zM742 466h1v1h-1zM758 466h1v1h-1zM773 466h1v1h-1zM789 466h1v1h-1zM805 466h1v1h-1zM820 466h1v1h-1zM836 466h1v1h-1zM851 466h1v1h-1zM24 482h1v1h-1zM40 482h1v1h-1zM56 482h1v1h-1zM71 482h1v1h-1zM87 482h1v1h-1zM102 482h1v1h-1zM118 482h1v1h-1zM134 482h1v1h-1zM149 482h1v1h-1zM165 482h1v1h-1zM180 482h1v1h-1zM196 482h1v1h-1zM212 482h1v1h-1zM227 482h1v1h-1zM243 482h1v1h-1zM258 482h1v1h-1zM274 482h1v1h-1zM290 482h1v1h-1zM305 482h1v1h-1zM321 482h1v1h-1zM336 482h1v1h-1zM352 482h1v1h-1zM368 482h1v1h-1zM383 482h1v1h-1zM399 482h1v1h-1zM414 482h1v1h-1zM430 482h1v1h-1zM446 482h1v1h-1zM461 482h1v1h-1zM477 482h1v1h-1zM492 482h1v1h-1zM508 482h1v1h-1zM524 482h1v1h-1zM539 482h1v1h-1zM555 482h1v1h-1zM570 482h1v1h-1zM586 482h1v1h-1zM602 482h1v1h-1zM617 482h1v1h-1zM633 482h1v1h-1zM649 482h1v1h-1zM664 482h1v1h-1zM680 482h1v1h-1zM695 482h1v1h-1zM711 482h1v1h-1zM727 482h1v1h-1zM742 482h1v1h-1zM758 482h1v1h-1zM773 482h1v1h-1zM789 482h1v1h-1zM805 482h1v1h-1zM820 482h1v1h-1zM836 482h1v1h-1zM851 482h1v1h-1zM24 497h1v1h-1zM40 497h1v1h-1zM56 497h1v1h-1zM71 497h1v1h-1zM87 497h1v1h-1zM102 497h1v1h-1zM118 497h1v1h-1zM134 497h1v1h-1zM149 497h1v1h-1zM165 497h1v1h-1zM180 497h1v1h-1zM196 497h1v1h-1zM212 497h1v1h-1zM227 497h1v1h-1zM243 497h1v1h-1zM258 497h1v1h-1zM274 497h1v1h-1zM290 497h1v1h-1zM305 497h1v1h-1zM321 497h1v1h-1zM336 497h1v1h-1zM352 497h1v1h-1zM368 497h1v1h-1zM383 497h1v1h-1zM399 497h1v1h-1zM414 497h1v1h-1zM430 497h1v1h-1zM446 497h1v1h-1zM461 497h1v1h-1zM477 497h1v1h-1zM492 497h1v1h-1zM508 497h1v1h-1zM524 497h1v1h-1zM539 497h1v1h-1zM555 497h1v1h-1zM570 497h1v1h-1zM586 497h1v1h-1zM602 497h1v1h-1zM617 497h1v1h-1zM633 497h1v1h-1zM649 497h1v1h-1zM664 497h1v1h-1zM680 497h1v1h-1zM695 497h1v1h-1zM711 497h1v1h-1zM727 497h1v1h-1zM742 497h1v1h-1zM758 497h1v1h-1zM773 497h1v1h-1zM789 497h1v1h-1zM805 497h1v1h-1zM820 497h1v1h-1zM836 497h1v1h-1zM851 497h1v1h-1zM24 513h1v1h-1zM40 513h1v1h-1zM56 513h1v1h-1zM71 513h1v1h-1zM87 513h1v1h-1zM102 513h1v1h-1zM118 513h1v1h-1zM134 513h1v1h-1zM149 513h1v1h-1zM165 513h1v1h-1zM180 513h1v1h-1zM196 513h1v1h-1zM212 513h1v1h-1zM227 513h1v1h-1zM243 513h1v1h-1zM258 513h1v1h-1zM274 513h1v1h-1zM290 513h1v1h-1zM305 513h1v1h-1zM321 513h1v1h-1zM336 513h1v1h-1zM352 513h1v1h-1zM368 513h1v1h-1zM383 513h1v1h-1zM399 513h1v1h-1zM414 513h1v1h-1zM430 513h1v1h-1zM446 513h1v1h-1zM461 513h1v1h-1zM477 513h1v1h-1zM492 513h1v1h-1zM508 513h1v1h-1zM524 513h1v1h-1zM539 513h1v1h-1zM555 513h1v1h-1zM570 513h1v1h-1zM586 513h1v1h-1zM602 513h1v1h-1zM617 513h1v1h-1zM633 513h1v1h-1zM649 513h1v1h-1zM664 513h1v1h-1zM680 513h1v1h-1zM695 513h1v1h-1zM711 513h1v1h-1zM727 513h1v1h-1zM742 513h1v1h-1zM758 513h1v1h-1zM773 513h1v1h-1zM789 513h1v1h-1zM805 513h1v1h-1zM820 513h1v1h-1zM836 513h1v1h-1zM851 513h1v1h-1zM24 529h1v1h-1zM40 529h1v1h-1zM56 529h1v1h-1zM71 529h1v1h-1zM87 529h1v1h-1zM102 529h1v1h-1zM118 529h1v1h-1zM134 529h1v1h-1zM149 529h1v1h-1zM165 529h1v1h-1zM180 529h1v1h-1zM196 529h1v1h-1zM212 529h1v1h-1zM227 529h1v1h-1zM243 529h1v1h-1zM258 529h1v1h-1zM274 529h1v1h-1zM290 529h1v1h-1zM305 529h1v1h-1zM321 529h1v1h-1zM336 529h1v1h-1zM352 529h1v1h-1zM368 529h1v1h-1zM383 529h1v1h-1zM399 529h1v1h-1zM414 529h1v1h-1zM430 529h1v1h-1zM446 529h1v1h-1zM461 529h1v1h-1zM477 529h1v1h-1zM492 529h1v1h-1zM508 529h1v1h-1zM524 529h1v1h-1zM539 529h1v1h-1zM555 529h1v1h-1zM570 529h1v1h-1zM586 529h1v1h-1zM602 529h1v1h-1zM617 529h1v1h-1zM633 529h1v1h-1zM649 529h1v1h-1zM664 529h1v1h-1zM680 529h1v1h-1zM695 529h1v1h-1zM711 529h1v1h-1zM727 529h1v1h-1zM742 529h1v1h-1zM758 529h1v1h-1zM773 529h1v1h-1zM789 529h1v1h-1zM805 529h1v1h-1zM820 529h1v1h-1zM836 529h1v1h-1zM851 529h1v1h-1zM24 544h1v1h-1zM40 544h1v1h-1zM56 544h1v1h-1zM71 544h1v1h-1zM87 544h1v1h-1zM102 544h1v1h-1zM118 544h1v1h-1zM134 544h1v1h-1zM149 544h1v1h-1zM165 544h1v1h-1zM180 544h1v1h-1zM196 544h1v1h-1zM212 544h1v1h-1zM227 544h1v1h-1zM243 544h1v1h-1zM258 544h1v1h-1zM274 544h1v1h-1zM290 544h1v1h-1zM305 544h1v1h-1zM321 544h1v1h-1zM336 544h1v1h-1zM352 544h1v1h-1zM368 544h1v1h-1zM383 544h1v1h-1zM399 544h1v1h-1zM414 544h1v1h-1zM430 544h1v1h-1zM446 544h1v1h-1zM461 544h1v1h-1zM477 544h1v1h-1zM492 544h1v1h-1zM508 544h1v1h-1zM524 544h1v1h-1zM539 544h1v1h-1zM555 544h1v1h-1zM570 544h1v1h-1zM586 544h1v1h-1zM602 544h1v1h-1zM617 544h1v1h-1zM633 544h1v1h-1zM649 544h1v1h-1zM664 544h1v1h-1zM680 544h1v1h-1zM695 544h1v1h-1zM711 544h1v1h-1zM727 544h1v1h-1zM742 544h1v1h-1zM758 544h1v1h-1zM773 544h1v1h-1zM789 544h1v1h-1zM805 544h1v1h-1zM820 544h1v1h-1zM836 544h1v1h-1zM851 544h1v1h-1zM24 560h1v1h-1zM40 560h1v1h-1zM56 560h1v1h-1zM71 560h1v1h-1zM87 560h1v1h-1zM102 560h1v1h-1zM118 560h1v1h-1zM134 560h1v1h-1zM149 560h1v1h-1zM165 560h1v1h-1zM180 560h1v1h-1zM196 560h1v1h-1zM212 560h1v1h-1zM227 560h1v1h-1zM243 560h1v1h-1zM258 560h1v1h-1zM274 560h1v1h-1zM290 560h1v1h-1zM305 560h1v1h-1zM321 560h1v1h-1zM336 560h1v1h-1zM352 560h1v1h-1zM368 560h1v1h-1zM383 560h1v1h-1zM399 560h1v1h-1zM414 560h1v1h-1zM430 560h1v1h-1zM446 560h1v1h-1zM461 560h1v1h-1zM477 560h1v1h-1zM492 560h1v1h-1zM508 560h1v1h-1zM524 560h1v1h-1zM539 560h1v1h-1zM555 560h1v1h-1zM570 560h1v1h-1zM586 560h1v1h-1zM602 560h1v1h-1zM617 560h1v1h-1zM633 560h1v1h-1zM649 560h1v1h-1zM664 560h1v1h-1zM680 560h1v1h-1zM695 560h1v1h-1zM711 560h1v1h-1zM727 560h1v1h-1zM742 560h1v1h-1zM758 560h1v1h-1zM773 560h1v1h-1zM789 560h1v1h-1zM805 560h1v1h-1zM820 560h1v1h-1zM836 560h1v1h-1zM851 560h1v1h-1zM24 575h1v1h-1zM40 575h1v1h-1zM56 575h1v1h-1zM71 575h1v1h-1zM87 575h1v1h-1zM102 575h1v1h-1zM118 575h1v1h-1zM134 575h1v1h-1zM149 575h1v1h-1zM165 575h1v1h-1zM180 575h1v1h-1zM196 575h1v1h-1zM212 575h1v1h-1zM227 575h1v1h-1zM243 575h1v1h-1zM258 575h1v1h-1zM274 575h1v1h-1zM290 575h1v1h-1zM305 575h1v1h-1zM321 575h1v1h-1zM336 575h1v1h-1zM352 575h1v1h-1zM368 575h1v1h-1zM383 575h1v1h-1zM399 575h1v1h-1zM414 575h1v1h-1zM430 575h1v1h-1zM446 575h1v1h-1zM461 575h1v1h-1zM477 575h1v1h-1zM492 575h1v1h-1zM508 575h1v1h-1zM524 575h1v1h-1zM539 575h1v1h-1zM555 575h1v1h-1zM570 575h1v1h-1zM586 575h1v1h-1zM602 575h1v1h-1zM617 575h1v1h-1zM633 575h1v1h-1zM649 575h1v1h-1zM664 575h1v1h-1zM680 575h1v1h-1zM695 575h1v1h-1zM711 575h1v1h-1zM727 575h1v1h-1zM742 575h1v1h-1zM758 575h1v1h-1zM773 575h1v1h-1zM789 575h1v1h-1zM805 575h1v1h-1zM820 575h1v1h-1zM836 575h1v1h-1zM851 575h1v1h-1zM24 591h1v1h-1zM40 591h1v1h-1zM56 591h1v1h-1zM71 591h1v1h-1zM87 591h1v1h-1zM102 591h1v1h-1zM118 591h1v1h-1zM134 591h1v1h-1zM149 591h1v1h-1zM165 591h1v1h-1zM180 591h1v1h-1zM196 591h1v1h-1zM212 591h1v1h-1zM227 591h1v1h-1zM243 591h1v1h-1zM258 591h1v1h-1zM274 591h1v1h-1zM290 591h1v1h-1zM305 591h1v1h-1zM321 591h1v1h-1zM336 591h1v1h-1zM352 591h1v1h-1zM368 591h1v1h-1zM383 591h1v1h-1zM399 591h1v1h-1zM414 591h1v1h-1zM430 591h1v1h-1zM446 591h1v1h-1zM461 591h1v1h-1zM477 591h1v1h-1zM492 591h1v1h-1zM508 591h1v1h-1zM524 591h1v1h-1zM539 591h1v1h-1zM555 591h1v1h-1zM570 591h1v1h-1zM586 591h1v1h-1zM602 591h1v1h-1zM617 591h1v1h-1zM633 591h1v1h-1zM649 591h1v1h-1zM664 591h1v1h-1zM680 591h1v1h-1zM695 591h1v1h-1zM711 591h1v1h-1zM727 591h1v1h-1zM742 591h1v1h-1zM758 591h1v1h-1zM773 591h1v1h-1zM789 591h1v1h-1zM805 591h1v1h-1zM820 591h1v1h-1zM836 591h1v1h-1zM851 591h1v1h-1zM24 607h1v1h-1zM40 607h1v1h-1zM56 607h1v1h-1zM71 607h1v1h-1zM87 607h1v1h-1zM102 607h1v1h-1zM118 607h1v1h-1zM134 607h1v1h-1zM149 607h1v1h-1zM165 607h1v1h-1zM180 607h1v1h-1zM196 607h1v1h-1zM212 607h1v1h-1zM227 607h1v1h-1zM243 607h1v1h-1zM258 607h1v1h-1zM274 607h1v1h-1zM290 607h1v1h-1zM305 607h1v1h-1zM321 607h1v1h-1zM336 607h1v1h-1zM352 607h1v1h-1zM368 607h1v1h-1zM383 607h1v1h-1zM399 607h1v1h-1zM414 607h1v1h-1zM430 607h1v1h-1zM446 607h1v1h-1zM461 607h1v1h-1zM477 607h1v1h-1zM492 607h1v1h-1zM508 607h1v1h-1zM524 607h1v1h-1zM539 607h1v1h-1zM555 607h1v1h-1zM570 607h1v1h-1zM586 607h1v1h-1zM602 607h1v1h-1zM617 607h1v1h-1zM633 607h1v1h-1zM649 607h1v1h-1zM664 607h1v1h-1zM680 607h1v1h-1zM695 607h1v1h-1zM711 607h1v1h-1zM727 607h1v1h-1zM742 607h1v1h-1zM758 607h1v1h-1zM773 607h1v1h-1zM789 607h1v1h-1zM805 607h1v1h-1zM820 607h1v1h-1zM836 607h1v1h-1zM851 607h1v1h-1zM24 622h1v1h-1zM40 622h1v1h-1zM56 622h1v1h-1zM71 622h1v1h-1zM87 622h1v1h-1zM102 622h1v1h-1zM118 622h1v1h-1zM134 622h1v1h-1zM149 622h1v1h-1zM165 622h1v1h-1zM180 622h1v1h-1zM196 622h1v1h-1zM212 622h1v1h-1zM227 622h1v1h-1zM243 622h1v1h-1zM258 622h1v1h-1zM274 622h1v1h-1zM290 622h1v1h-1zM305 622h1v1h-1zM321 622h1v1h-1zM336 622h1v1h-1zM352 622h1v1h-1zM368 622h1v1h-1zM383 622h1v1h-1zM399 622h1v1h-1zM414 622h1v1h-1zM430 622h1v1h-1zM446 622h1v1h-1zM461 622h1v1h-1zM477 622h1v1h-1zM492 622h1v1h-1zM508 622h1v1h-1zM524 622h1v1h-1zM539 622h1v1h-1zM555 622h1v1h-1zM570 622h1v1h-1zM586 622h1v1h-1zM602 622h1v1h-1zM617 622h1v1h-1zM633 622h1v1h-1zM649 622h1v1h-1zM664 622h1v1h-1zM680 622h1v1h-1zM695 622h1v1h-1zM711 622h1v1h-1zM727 622h1v1h-1zM742 622h1v1h-1zM758 622h1v1h-1zM773 622h1v1h-1zM789 622h1v1h-1zM805 622h1v1h-1zM820 622h1v1h-1zM836 622h1v1h-1zM851 622h1v1h-1zM24 638h1v1h-1zM40 638h1v1h-1zM56 638h1v1h-1zM71 638h1v1h-1zM87 638h1v1h-1zM102 638h1v1h-1zM118 638h1v1h-1zM134 638h1v1h-1zM149 638h1v1h-1zM165 638h1v1h-1zM180 638h1v1h-1zM196 638h1v1h-1zM212 638h1v1h-1zM227 638h1v1h-1zM243 638h1v1h-1zM258 638h1v1h-1zM274 638h1v1h-1zM290 638h1v1h-1zM305 638h1v1h-1zM321 638h1v1h-1zM336 638h1v1h-1zM352 638h1v1h-1zM368 638h1v1h-1zM383 638h1v1h-1zM399 638h1v1h-1zM414 638h1v1h-1zM430 638h1v1h-1zM446 638h1v1h-1zM461 638h1v1h-1zM477 638h1v1h-1zM492 638h1v1h-1zM508 638h1v1h-1zM524 638h1v1h-1zM539 638h1v1h-1zM555 638h1v1h-1zM570 638h1v1h-1zM586 638h1v1h-1zM602 638h1v1h-1zM617 638h1v1h-1zM633 638h1v1h-1zM649 638h1v1h-1zM664 638h1v1h-1zM680 638h1v1h-1zM695 638h1v1h-1zM711 638h1v1h-1zM727 638h1v1h-1zM742 638h1v1h-1zM758 638h1v1h-1zM773 638h1v1h-1zM789 638h1v1h-1zM805 638h1v1h-1zM820 638h1v1h-1zM836 638h1v1h-1zM851 638h1v1h-1z" fill="#b0b0b0"/>
<rect x="149" y="185" width="625" height="1" fill="#800040"/>
<rect x="149" y="185" width="1" height="283" fill="#800040"/>
<rect x="149" y="263" width="33" height="1" fill="#800040"/>
<rect x="181" y="263" width="17" height="1" fill="#ff0000"/>
<polyline points="197,263.5 200.5,257.5 205.5,270.0 210.5,257.5 215.5,270.0 220,257.5 225,270.0 228,263.5" fill="none" stroke="#0000ff" stroke-width="1.1" />
<rect x="228" y="263" width="16" height="1" fill="#ff0000"/>
<rect x="243" y="263" width="173" height="1" fill="#800040"/>
<rect x="415" y="263" width="16" height="1" fill="#ff0000"/>
<polygon points="426,258.5 431,263.5 426,268.5" fill="#ff0000"/>
<rect x="71" y="326" width="111" height="1" fill="#800040"/>
<rect x="181" y="326" width="17" height="1" fill="#ff0000"/>
<polyline points="197,326.5 200.5,320.5 205.5,333.0 210.5,320.5 215.5,333.0 220,320.5 225,333.0 228,326.5" fill="none" stroke="#0000ff" stroke-width="1.1" />
<rect x="228" y="326" width="16" height="1" fill="#ff0000"/>
<rect x="243" y="326" width="173" height="1" fill="#800040"/>
<rect x="415" y="326" width="16" height="1" fill="#ff0000"/>
<polygon points="426,321.5 431,326.5 426,331.5" fill="#ff0000"/>
<rect x="71" y="326" width="1" height="142" fill="#800040"/>
<rect x="71" y="467" width="1" height="17" fill="#ff0000"/>
<rect x="71" y="483" width="1" height="4" fill="#0000ff"/>
<rect x="63" y="486" width="17" height="1" fill="#0000ff"/>
<rect x="63" y="493" width="17" height="1" fill="#0000ff"/>
<rect x="71" y="493" width="1" height="5" fill="#0000ff"/>
<rect x="71" y="497" width="1" height="17" fill="#ff0000"/>
<rect x="71" y="513" width="1" height="95" fill="#800040"/>
<rect x="55" y="607" width="33" height="1" fill="#ff0000"/>
<rect x="60" y="611" width="22" height="1" fill="#ff0000"/>
<rect x="66" y="616" width="12" height="1" fill="#ff0000"/>
<rect x="69" y="621" width="4" height="1" fill="#ff0000"/>
<rect x="149" y="467" width="1" height="17" fill="#ff0000"/>
<rect x="149" y="483" width="1" height="4" fill="#0000ff"/>
<rect x="141" y="486" width="17" height="1" fill="#0000ff"/>
<rect x="141" y="493" width="17" height="1" fill="#0000ff"/>
<rect x="149" y="493" width="1" height="5" fill="#0000ff"/>
<rect x="149" y="497" width="1" height="17" fill="#ff0000"/>
<rect x="149" y="513" width="1" height="95" fill="#800040"/>
<rect x="133" y="607" width="33" height="1" fill="#ff0000"/>
<rect x="138" y="611" width="22" height="1" fill="#ff0000"/>
<rect x="144" y="616" width="12" height="1" fill="#ff0000"/>
<rect x="147" y="621" width="4" height="1" fill="#ff0000"/>
<rect x="289" y="326" width="1" height="32" fill="#800040"/>
<rect x="289" y="357" width="1" height="17" fill="#ff0000"/>
<rect x="289" y="419" width="1" height="17" fill="#ff0000"/>
<rect x="289" y="435" width="1" height="16" fill="#800040"/>
<rect x="289" y="450" width="1" height="17" fill="#ff0000"/>
<polyline points="289.5,466 296.5,469.5 283.0,474 296.5,479 283.0,484 296.5,488.5 283.0,493 289.5,497" fill="none" stroke="#0000ff" stroke-width="1.1" />
<rect x="289" y="497" width="1" height="17" fill="#ff0000"/>
<rect x="289" y="513" width="1" height="17" fill="#800040"/>
<rect x="289" y="529" width="1" height="16" fill="#ff0000"/>
<polyline points="289.5,544 296.5,547.5 283.0,552 296.5,557 283.0,562 296.5,566.5 283.0,571 289.5,575" fill="none" stroke="#0000ff" stroke-width="1.1" />
<rect x="289" y="575" width="1" height="17" fill="#ff0000"/>
<rect x="289" y="591" width="1" height="17" fill="#800040"/>
<rect x="477" y="185" width="1" height="60" fill="#800040"/>
<polygon points="472.5,244 482.5,244 477.5,249" fill="#ff0000"/>
<rect x="477" y="249" width="1" height="24" fill="#0000ff"/>
<rect x="477" y="318" width="1" height="24" fill="#0000ff"/>
<rect x="477" y="345" width="1" height="263" fill="#800040"/>
<rect x="461" y="607" width="33" height="1" fill="#ff0000"/>
<rect x="466" y="611" width="22" height="1" fill="#ff0000"/>
<rect x="472" y="616" width="12" height="1" fill="#ff0000"/>
<rect x="475" y="621" width="4" height="1" fill="#ff0000"/>
<polygon points="472.5,346 482,346 477.5,341" fill="#ff0000"/>
<rect x="523" y="295" width="17" height="1" fill="#ff0000"/>
<rect x="539" y="295" width="64" height="1" fill="#800040"/>
<rect x="602" y="295" width="17" height="1" fill="#ff0000"/>
<polyline points="618,295.5 621.5,289.5 626.5,302.0 631.5,289.5 636.5,302.0 641,289.5 646,302.0 649,295.5" fill="none" stroke="#0000ff" stroke-width="1.1" />
<rect x="649" y="295" width="16" height="1" fill="#ff0000"/>
<rect x="664" y="295" width="32" height="1" fill="#800040"/>
<rect x="695" y="295" width="1" height="94" fill="#800040"/>
<rect x="336" y="388" width="17" height="1" fill="#ff0000"/>
<rect x="352" y="388" width="344" height="1" fill="#800040"/>
<rect x="773" y="185" width="1" height="143" fill="#800040"/>
<rect x="773" y="327" width="1" height="22" fill="#0000ff"/>
<rect x="757" y="348" width="33" height="1" fill="#0000ff"/>
<rect x="765" y="352" width="17" height="1" fill="#0000ff"/>
<rect x="758" y="357" width="33" height="1" fill="#0000ff"/>
<rect x="765" y="363" width="17" height="1" fill="#0000ff"/>
<rect x="773" y="363" width="1" height="11" fill="#0000ff"/>
<rect x="773" y="373" width="1" height="16" fill="#ff0000"/>
<rect x="773" y="388" width="1" height="220" fill="#800040"/>
<rect x="757" y="607" width="33" height="1" fill="#ff0000"/>
<rect x="762" y="611" width="22" height="1" fill="#ff0000"/>
<rect x="768" y="616" width="12" height="1" fill="#ff0000"/>
<rect x="771" y="621" width="4" height="1" fill="#ff0000"/>
<rect x="761" y="370" width="3" height="1" fill="#0000ff"/>
<rect x="762" y="337" width="1" height="3" fill="#0000ff"/>
<rect x="761" y="339" width="3" height="1" fill="#0000ff"/>
<polygon points="430.5,249 523,295 430.5,341" fill="none" stroke="#0000ff" stroke-width="1.1"/>
<polyline points="289.5,373.5 322.5,373.5 336.5,380" fill="none" stroke="#0000ff" stroke-width="1" />
<rect x="336" y="373" width="1" height="31" fill="#0000ff"/>
<polyline points="289.5,373.5 289.5,388.5 305.5,396" fill="none" stroke="#0000ff" stroke-width="1" />
<rect x="305" y="388" width="1" height="31" fill="#0000ff"/>
<polyline points="336.5,397 322,404.5 305.5,404.5" fill="none" stroke="#0000ff" stroke-width="1" />
<polyline points="305.5,412 289.5,419.5" fill="none" stroke="#0000ff" stroke-width="1" />
<polyline points="325.5,402.5 332,395.5" fill="none" stroke="#0000ff" stroke-width="1" />
<polyline points="325.5,402.5 336,401.5" fill="none" stroke="#0000ff" stroke-width="1" />
<polygon points="323.5,404 328.5,399 330,403" fill="#0000ff" shape-rendering="auto"/>
<polyline points="294,417.5 300,411.5" fill="none" stroke="#0000ff" stroke-width="1" />
<polyline points="294,417.5 304.5,416.5" fill="none" stroke="#0000ff" stroke-width="1" />
<polygon points="292,418.5 297,414 298.5,418" fill="#0000ff" shape-rendering="auto"/>
<path d="M148 260h3v1h1v1h1v3h-1v1h-1v1h-3v-1h-1v-1h-1v-3h1v-1h1z" fill="#ff00ff"/>
<path d="M148 323h3v1h1v1h1v3h-1v1h-1v1h-3v-1h-1v-1h-1v-3h1v-1h1z" fill="#ff00ff"/>
<path d="M288 323h3v1h1v1h1v3h-1v1h-1v1h-3v-1h-1v-1h-1v-3h1v-1h1z" fill="#ff00ff"/>
<path d="M476 182h3v1h1v1h1v3h-1v1h-1v1h-3v-1h-1v-1h-1v-3h1v-1h1z" fill="#ff00ff"/>
<rect x="321" y="170" width="45" height="16" fill="#800040"/>
<text x="322" y="183" font-size="14" fill="#fff">5.000V</text>
<rect x="328" y="263" width="45" height="16" fill="#800040"/>
<text x="329" y="276" font-size="14" fill="#fff">5.000V</text>
<rect x="352" y="326" width="45" height="16" fill="#800040"/>
<text x="353" y="339" font-size="14" fill="#fff">4.995V</text>
<rect x="555" y="295" width="45" height="16" fill="#800040"/>
<text x="556" y="308" font-size="14" fill="#fff">3.760V</text>
<rect x="555" y="388" width="45" height="16" fill="#800040"/>
<text x="556" y="401" font-size="14" fill="#fff">3.754V</text>
<rect x="289" y="443" width="45" height="16" fill="#800040"/>
<text x="290" y="456" font-size="14" fill="#fff">2.793V</text>
<rect x="289" y="521" width="45" height="16" fill="#800040"/>
<text x="290" y="534" font-size="14" fill="#fff">2.038V</text>
<rect x="71" y="560" width="17" height="16" fill="#800040"/>
<text x="72" y="573" font-size="14" fill="#fff">0V</text>
<rect x="149" y="560" width="17" height="16" fill="#800040"/>
<text x="150" y="573" font-size="14" fill="#fff">0V</text>
<rect x="477" y="474" width="17" height="16" fill="#800040"/>
<text x="478" y="487" font-size="14" fill="#fff">0V</text>
<rect x="773" y="497" width="17" height="16" fill="#800040"/>
<text x="774" y="510" font-size="14" fill="#fff">0V</text>
<rect x="289" y="599" width="17" height="16" fill="#800040"/>
<text x="290" y="612" font-size="14" fill="#fff">0V</text>
<rect x="289" y="452" width="1" height="15" fill="#ff0000"/>
<rect x="289" y="530" width="1" height="15" fill="#ff0000"/>
<rect x="289" y="591" width="1" height="9" fill="#800040"/>
<rect x="273" y="607" width="33" height="1" fill="#ff0000"/>
<rect x="278" y="611" width="22" height="1" fill="#ff0000"/>
<rect x="284" y="616" width="12" height="1" fill="#ff0000"/>
<rect x="287" y="621" width="4" height="1" fill="#ff0000"/>
<path d="M220.5,133 v4 M218.5,135.5 h4 M220.5,133 l-2,2.5" stroke="#000" stroke-width="1.1" fill="none"/>
<path d="M576,132.5 h3.5 v4.5 h-3.5 M577,134.8 h2.5" stroke="#000" stroke-width="1.2" fill="none"/>
<path d="M15.5,283.5 h-3 l-1,1 v2.5 l1,1 h3" stroke="#000" stroke-width="1.1" fill="none"/>
<rect x="11" y="439" width="8" height="1" fill="#000"/><path d="M15,436 v7 M16,437 v5 M17,438 v3 M18,438 v3" stroke="#000" stroke-width="1"/>
<path d="M12.5,597.5 h2.5 v5 h-2.5 z M12.5,600 h2.5" stroke="#000" stroke-width="1.2" fill="none"/>
<text x="196" y="230" font-size="14" fill="#000080" >R1</text>
<text x="196" y="245" font-size="14" fill="#000080" >0.1</text>
<text x="196" y="354" font-size="14" fill="#000080" >R2</text>
<text x="196" y="370" font-size="14" fill="#000080" >100</text>
<text x="508" y="245" font-size="14" fill="#000080" >U1A</text>
<text x="508" y="261" font-size="14" fill="#000080" >LM358/ON</text>
<text x="617" y="261" font-size="14" fill="#000080" >R5</text>
<text x="617" y="276" font-size="14" fill="#000080" >1K</text>
<text x="804" y="339" font-size="14" fill="#000080" >V1</text>
<text x="804" y="354" font-size="14" fill="#000" >5V</text>
<text x="336" y="417" font-size="14" fill="#000080" >Q1</text>
<text x="336" y="432" font-size="14" fill="#000080" >2n3904d/ON</text>
<text x="305" y="479" font-size="14" fill="#000080" >R3</text>
<text x="305" y="495" font-size="14" fill="#000080" >1K</text>
<text x="305" y="557" font-size="14" fill="#000080" >R4</text>
<text x="305" y="573" font-size="14" fill="#000080" >2.7K</text>
<text x="87" y="495" font-size="14" fill="#000080" >C2</text>
<text x="87" y="511" font-size="14" fill="#000080" >100u</text>
<text x="165" y="495" font-size="14" fill="#000080" >C1</text>
<text x="165" y="511" font-size="14" fill="#000080" >100u</text>
<text x="411" y="259" font-size="14" fill="#000" >3</text>
<text x="411" y="322" font-size="14" fill="#000" >2</text>
<text x="536" y="291" font-size="14" fill="#000" >1</text>
<rect x="81.5" y="617.5" width="6" height="11" rx="2.2" fill="none" stroke="#000" stroke-width="1" shape-rendering="auto"/>
<rect x="159.5" y="617.5" width="6" height="11" rx="2.2" fill="none" stroke="#000" stroke-width="1" shape-rendering="auto"/>
<rect x="299.5" y="617.5" width="6" height="11" rx="2.2" fill="none" stroke="#000" stroke-width="1" shape-rendering="auto"/>
<rect x="487.5" y="617.5" width="6" height="11" rx="2.2" fill="none" stroke="#000" stroke-width="1" shape-rendering="auto"/>
<rect x="783.5" y="617.5" width="6" height="11" rx="2.2" fill="none" stroke="#000" stroke-width="1" shape-rendering="auto"/>
<text x="441" y="270" font-size="14" fill="#000080" >+</text>
<text x="486" y="301" font-size="13" fill="#000080" >OUT</text>
<text transform="translate(463,229) rotate(90)" font-size="13" fill="#000">8</text>
<text transform="translate(473,361) rotate(-90)" font-size="13" fill="#000">4</text>
<text transform="translate(476,256) rotate(90)" font-size="10" fill="#000080">+</text>
<path d="M474.5,264.5 l9,3.5 l-9,3.5" fill="none" stroke="#000080" stroke-width="1"/>
<path d="M480.5,318 v6" stroke="#000080" stroke-width="1"/>
<path d="M474.5,325 l9,3.5 l-9,3.5" fill="none" stroke="#000080" stroke-width="1"/>
<g shape-rendering="auto"><circle cx="320.3" cy="231.7" r="7.4" fill="#55f055"/><line x1="320" y1="232" x2="297" y2="256" stroke="#55f055" stroke-width="5"/><line x1="298" y1="255" x2="289.5" y2="263.5" stroke="#55f055" stroke-width="1.3"/><path d="M315.5,214.5 l7,3 l-7,3" fill="none" stroke="#55f055" stroke-width="1.2"/></g>
<g shape-rendering="auto"><circle cx="258" cy="482" r="8" fill="#ff5555"/><line x1="258" y1="482" x2="283.5" y2="506.5" stroke="#ff5555" stroke-width="5"/><line x1="283" y1="506" x2="289.5" y2="512.5" stroke="#ff5555" stroke-width="1.3"/><path d="M240.5,488 l3,-7 l3,7" fill="none" stroke="#ff5555" stroke-width="1.2"/></g>
<g shape-rendering="auto">
<circle cx="382.5" cy="299.5" r="3" fill="none" stroke="#f0a030" stroke-width="3"/>
<circle cx="392.6" cy="307.3" r="3" fill="none" stroke="#f0a030" stroke-width="3"/>
<circle cx="451.2" cy="309.5" r="3" fill="none" stroke="#f0a030" stroke-width="3"/>
<circle cx="467.5" cy="309.5" r="3" fill="none" stroke="#f0a030" stroke-width="3"/>
<path d="M387,299.5 H412 L421.5,309.5 H447 M397,307 H409 L418.5,317 H461 L465,313" fill="none" stroke="#1e5aa0" stroke-width="2.2"/>
<text x="372" y="348.5" font-size="28.5" fill="#1f5ca8" stroke="#1f5ca8" stroke-width="0.6" transform="translate(372,0) scale(1.07,1) translate(-372,0)">EDA365</text>
</g>
</svg>
</body></html>
